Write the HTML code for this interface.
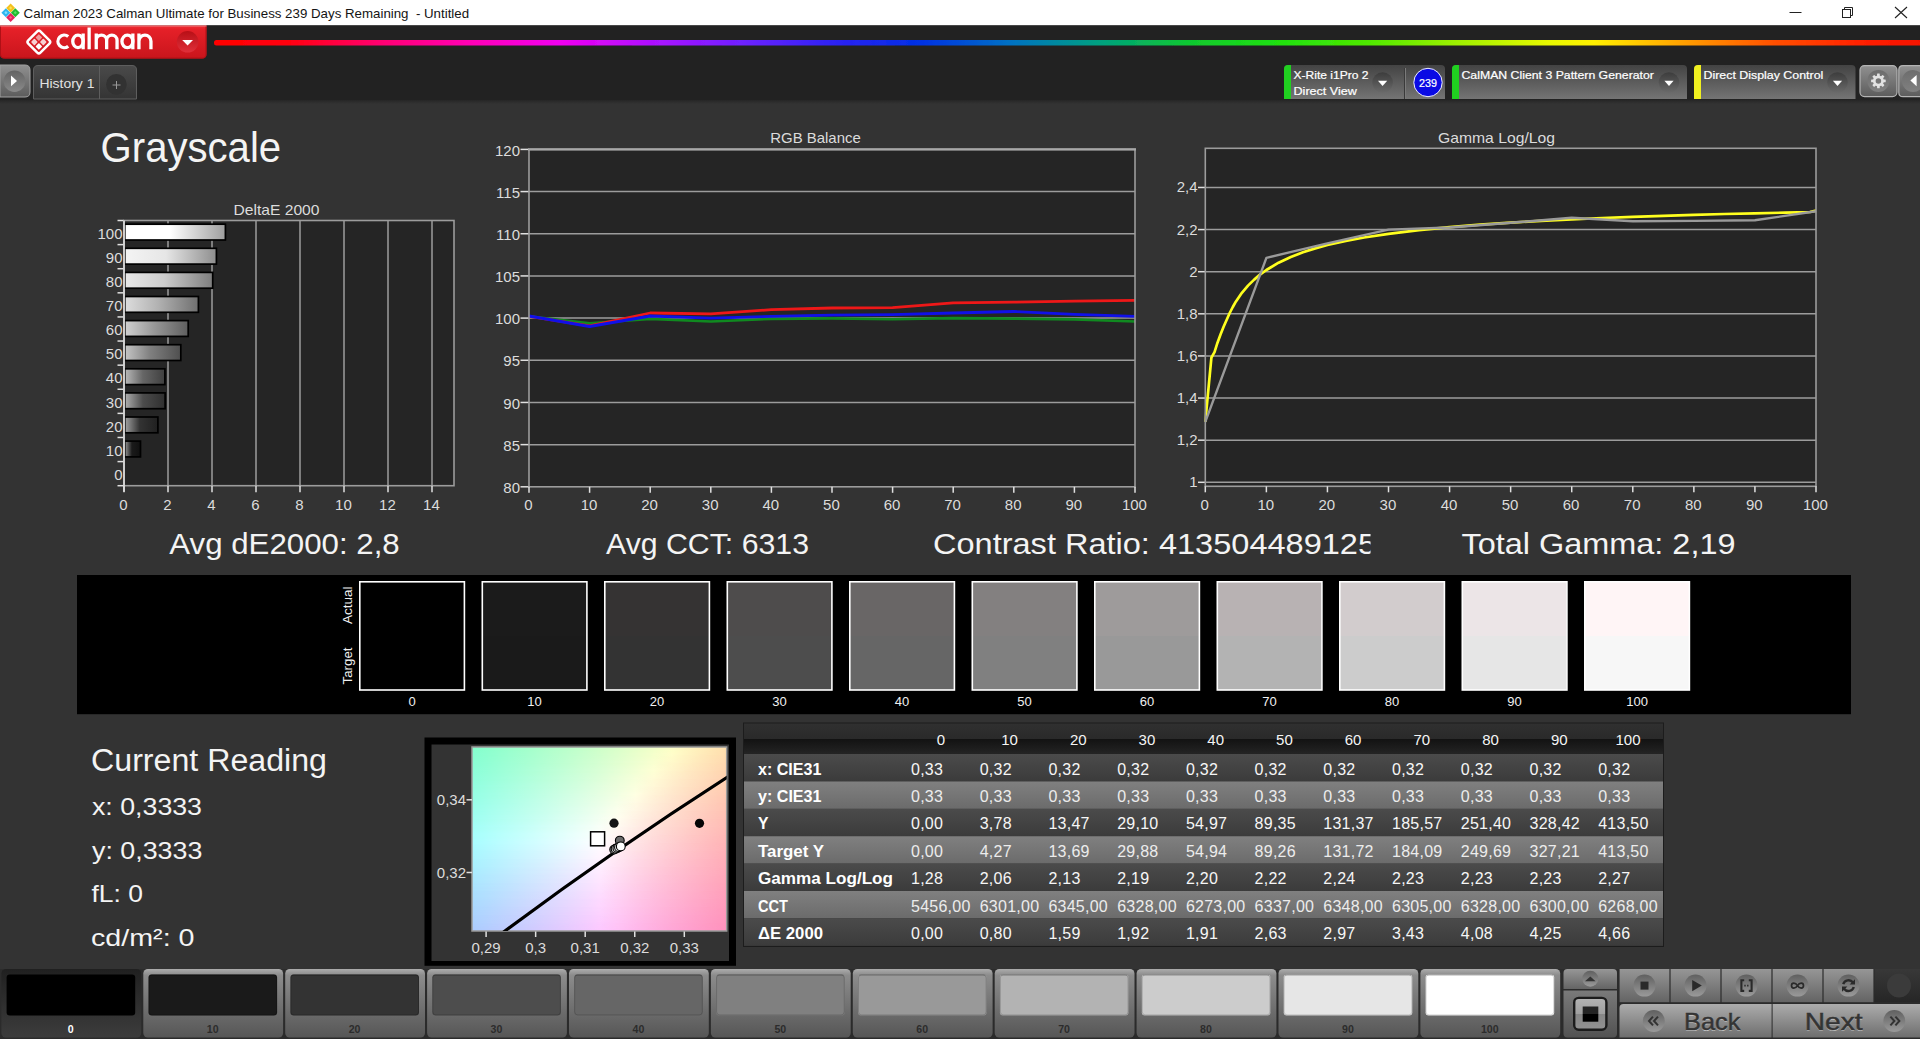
<!DOCTYPE html>
<html lang="en"><head><meta charset="utf-8"><title>Calman 2023 - Grayscale</title>
<style>
html,body{margin:0;padding:0;background:#333333;overflow:hidden}
body{width:1920px;height:1039px;position:relative;font-family:"Liberation Sans", sans-serif}
svg{position:absolute;left:0;top:0;display:block}
text{font-family:"Liberation Sans", sans-serif}
</style></head><body>
<svg width="1920" height="1039" viewBox="0 0 1920 1039">
<defs>
<linearGradient id="gRed" x1="0" y1="0" x2="0" y2="1"><stop offset="0" stop-color="#f03038"/><stop offset="0.12" stop-color="#e52028"/><stop offset="1" stop-color="#c9151c"/></linearGradient>
<linearGradient id="gRedBtn" x1="0" y1="0" x2="0" y2="1"><stop offset="0" stop-color="#b80f16"/><stop offset="1" stop-color="#e0303a"/></linearGradient>
<linearGradient id="gRainbow" x1="0" y1="0" x2="1" y2="0"><stop offset="0" stop-color="#ff0000"/><stop offset="0.044" stop-color="#ff0010"/><stop offset="0.097" stop-color="#ff0070"/><stop offset="0.149" stop-color="#ff00b4"/><stop offset="0.202" stop-color="#f000f0"/><stop offset="0.254" stop-color="#b010ff"/><stop offset="0.307" stop-color="#7020ff"/><stop offset="0.359" stop-color="#3020f4"/><stop offset="0.412" stop-color="#0030e4"/><stop offset="0.464" stop-color="#0070c4"/><stop offset="0.517" stop-color="#00a080"/><stop offset="0.57" stop-color="#10c830"/><stop offset="0.622" stop-color="#20e010"/><stop offset="0.675" stop-color="#50e800"/><stop offset="0.727" stop-color="#a0f000"/><stop offset="0.78" stop-color="#e8f800"/><stop offset="0.806" stop-color="#fff000"/><stop offset="0.858" stop-color="#ffa000"/><stop offset="0.911" stop-color="#ff5000"/><stop offset="0.963" stop-color="#ff2000"/><stop offset="1" stop-color="#f41000"/></linearGradient>
<linearGradient id="gPanel" x1="0" y1="0" x2="0" y2="1"><stop offset="0" stop-color="#434343"/><stop offset="1" stop-color="#747474"/></linearGradient>
<linearGradient id="gBtnLite" x1="0" y1="0" x2="0" y2="1"><stop offset="0" stop-color="#909090"/><stop offset="1" stop-color="#5c5c5c"/></linearGradient>
<linearGradient id="gCirc" x1="0" y1="0" x2="0" y2="1"><stop offset="0" stop-color="#3c3c3c"/><stop offset="1" stop-color="#6a6a6a"/></linearGradient>
<linearGradient id="gCircL" x1="0" y1="0" x2="0" y2="1"><stop offset="0" stop-color="#636363"/><stop offset="1" stop-color="#8a8a8a"/></linearGradient>
<linearGradient id="gShade" x1="0" y1="0" x2="0" y2="1"><stop offset="0" stop-color="#262626"/><stop offset="1" stop-color="#333333"/></linearGradient>
<filter id="fBlur" x="-1%" y="-100%" width="102%" height="300%"><feGaussianBlur stdDeviation="0.7"/></filter>
<linearGradient id="gTab" x1="0" y1="0" x2="0" y2="1"><stop offset="0" stop-color="#4a4a4a"/><stop offset="1" stop-color="#343434"/></linearGradient>
<linearGradient id="gHdr" x1="0" y1="0" x2="0" y2="1"><stop offset="0" stop-color="#303030"/><stop offset="0.5" stop-color="#2a2a2a"/><stop offset="0.5" stop-color="#121212"/><stop offset="1" stop-color="#242424"/></linearGradient>
<linearGradient id="gRowD" x1="0" y1="0" x2="0" y2="1"><stop offset="0" stop-color="#4b4b4b"/><stop offset="1" stop-color="#3b3b3b"/></linearGradient>
<linearGradient id="gRowL" x1="0" y1="0" x2="0" y2="1"><stop offset="0" stop-color="#808080"/><stop offset="1" stop-color="#6b6b6b"/></linearGradient>
<linearGradient id="gBB" x1="0" y1="0" x2="0" y2="1"><stop offset="0" stop-color="#acacac"/><stop offset="0.05" stop-color="#9a9a9a"/><stop offset="0.09" stop-color="#8c8c8c"/><stop offset="1" stop-color="#565656"/></linearGradient>
<linearGradient id="gBBsel" x1="0" y1="0" x2="0" y2="1"><stop offset="0" stop-color="#202020"/><stop offset="1" stop-color="#3c3c3c"/></linearGradient>
<linearGradient id="gCtl" x1="0" y1="0" x2="0" y2="1"><stop offset="0" stop-color="#969696"/><stop offset="1" stop-color="#646464"/></linearGradient>
<linearGradient id="gCtl2" x1="0" y1="0" x2="0" y2="1"><stop offset="0" stop-color="#acacac"/><stop offset="1" stop-color="#6e6e6e"/></linearGradient>
<linearGradient id="gCtlD" x1="0" y1="0" x2="0" y2="1"><stop offset="0" stop-color="#7a7a7a"/><stop offset="1" stop-color="#525252"/></linearGradient>
<linearGradient id="gGloss" x1="0" y1="0" x2="0" y2="1"><stop offset="0" stop-color="#b4b4b4"/><stop offset="0.5" stop-color="#a0a0a0"/><stop offset="0.5" stop-color="#868686"/><stop offset="1" stop-color="#929292"/></linearGradient>
<linearGradient id="gDarkR" x1="0" y1="0" x2="0" y2="1"><stop offset="0" stop-color="#383838"/><stop offset="1" stop-color="#262626"/></linearGradient>
<linearGradient id="gCtlC" x1="0" y1="0" x2="0" y2="1"><stop offset="0" stop-color="#606060"/><stop offset="1" stop-color="#9a9a9a"/></linearGradient>
<linearGradient id="vfadeG" x1="0" y1="0" x2="0" y2="1"><stop offset="0" stop-color="#000"/><stop offset="1" stop-color="#fff"/></linearGradient>
<mask id="vfade" maskContentUnits="objectBoundingBox"><rect x="0" y="0" width="1" height="1" fill="url(#vfadeG)"/></mask>

<linearGradient id="gb100" x1="0" y1="0" x2="1" y2="0"><stop offset="0" stop-color="#ffffff"/><stop offset="0.45" stop-color="#ffffff"/><stop offset="1" stop-color="#9e9e9e"/></linearGradient>
<linearGradient id="gb90" x1="0" y1="0" x2="1" y2="0"><stop offset="0" stop-color="#f4f4f4"/><stop offset="0.45" stop-color="#e6e6e6"/><stop offset="1" stop-color="#8e8e8e"/></linearGradient>
<linearGradient id="gb80" x1="0" y1="0" x2="1" y2="0"><stop offset="0" stop-color="#e8e8e8"/><stop offset="0.45" stop-color="#cccccc"/><stop offset="1" stop-color="#7e7e7e"/></linearGradient>
<linearGradient id="gb70" x1="0" y1="0" x2="1" y2="0"><stop offset="0" stop-color="#dddddd"/><stop offset="0.45" stop-color="#b2b2b2"/><stop offset="1" stop-color="#6f6f6f"/></linearGradient>
<linearGradient id="gb60" x1="0" y1="0" x2="1" y2="0"><stop offset="0" stop-color="#d1d1d1"/><stop offset="0.45" stop-color="#999999"/><stop offset="1" stop-color="#5f5f5f"/></linearGradient>
<linearGradient id="gb50" x1="0" y1="0" x2="1" y2="0"><stop offset="0" stop-color="#c6c6c6"/><stop offset="0.45" stop-color="#808080"/><stop offset="1" stop-color="#4f4f4f"/></linearGradient>
<linearGradient id="gb40" x1="0" y1="0" x2="1" y2="0"><stop offset="0" stop-color="#bababa"/><stop offset="0.45" stop-color="#666666"/><stop offset="1" stop-color="#3f3f3f"/></linearGradient>
<linearGradient id="gb30" x1="0" y1="0" x2="1" y2="0"><stop offset="0" stop-color="#afafaf"/><stop offset="0.45" stop-color="#4c4c4c"/><stop offset="1" stop-color="#2f2f2f"/></linearGradient>
<linearGradient id="gb20" x1="0" y1="0" x2="1" y2="0"><stop offset="0" stop-color="#a3a3a3"/><stop offset="0.45" stop-color="#333333"/><stop offset="1" stop-color="#202020"/></linearGradient>
<linearGradient id="gb10" x1="0" y1="0" x2="1" y2="0"><stop offset="0" stop-color="#989898"/><stop offset="0.45" stop-color="#1a1a1a"/><stop offset="1" stop-color="#101010"/></linearGradient>
<linearGradient id="cr0" x1="0" y1="0" x2="1" y2="0"><stop offset="0.0000" stop-color="#83ffcd"/><stop offset="0.0714" stop-color="#8dffcc"/><stop offset="0.1429" stop-color="#98ffcc"/><stop offset="0.2143" stop-color="#a2ffcb"/><stop offset="0.2857" stop-color="#adffcb"/><stop offset="0.3571" stop-color="#b7ffca"/><stop offset="0.4286" stop-color="#c2ffca"/><stop offset="0.5000" stop-color="#ceffc9"/><stop offset="0.5714" stop-color="#d9ffc9"/><stop offset="0.6429" stop-color="#e5ffc8"/><stop offset="0.7143" stop-color="#f1ffc8"/><stop offset="0.7857" stop-color="#fdffc7"/><stop offset="0.8571" stop-color="#fff5bf"/><stop offset="0.9286" stop-color="#ffeab6"/><stop offset="1.0000" stop-color="#ffdfad"/></linearGradient>
<linearGradient id="cr1" x1="0" y1="0" x2="1" y2="0"><stop offset="0.0000" stop-color="#86ffd1"/><stop offset="0.0714" stop-color="#90ffd0"/><stop offset="0.1429" stop-color="#9bffd0"/><stop offset="0.2143" stop-color="#a5ffcf"/><stop offset="0.2857" stop-color="#b0ffcf"/><stop offset="0.3571" stop-color="#bbffce"/><stop offset="0.4286" stop-color="#c6ffce"/><stop offset="0.5000" stop-color="#d1ffcd"/><stop offset="0.5714" stop-color="#ddffcd"/><stop offset="0.6429" stop-color="#e9ffcc"/><stop offset="0.7143" stop-color="#f5ffcc"/><stop offset="0.7857" stop-color="#fffdca"/><stop offset="0.8571" stop-color="#fff1c0"/><stop offset="0.9286" stop-color="#ffe6b6"/><stop offset="1.0000" stop-color="#ffdcae"/></linearGradient>
<linearGradient id="cr2" x1="0" y1="0" x2="1" y2="0"><stop offset="0.0000" stop-color="#89ffd4"/><stop offset="0.0714" stop-color="#93ffd4"/><stop offset="0.1429" stop-color="#9effd4"/><stop offset="0.2143" stop-color="#a8ffd3"/><stop offset="0.2857" stop-color="#b3ffd3"/><stop offset="0.3571" stop-color="#beffd2"/><stop offset="0.4286" stop-color="#caffd2"/><stop offset="0.5000" stop-color="#d5ffd2"/><stop offset="0.5714" stop-color="#e1ffd1"/><stop offset="0.6429" stop-color="#edffd1"/><stop offset="0.7143" stop-color="#f9ffd0"/><stop offset="0.7857" stop-color="#fff8ca"/><stop offset="0.8571" stop-color="#ffedc0"/><stop offset="0.9286" stop-color="#ffe2b7"/><stop offset="1.0000" stop-color="#ffd8af"/></linearGradient>
<linearGradient id="cr3" x1="0" y1="0" x2="1" y2="0"><stop offset="0.0000" stop-color="#8cffd9"/><stop offset="0.0714" stop-color="#96ffd8"/><stop offset="0.1429" stop-color="#a1ffd8"/><stop offset="0.2143" stop-color="#acffd7"/><stop offset="0.2857" stop-color="#b7ffd7"/><stop offset="0.3571" stop-color="#c2ffd7"/><stop offset="0.4286" stop-color="#ceffd6"/><stop offset="0.5000" stop-color="#d9ffd6"/><stop offset="0.5714" stop-color="#e5ffd6"/><stop offset="0.6429" stop-color="#f2ffd5"/><stop offset="0.7143" stop-color="#feffd5"/><stop offset="0.7857" stop-color="#fff4cb"/><stop offset="0.8571" stop-color="#ffe8c1"/><stop offset="0.9286" stop-color="#ffdeb8"/><stop offset="1.0000" stop-color="#ffd4af"/></linearGradient>
<linearGradient id="cr4" x1="0" y1="0" x2="1" y2="0"><stop offset="0.0000" stop-color="#8fffdd"/><stop offset="0.0714" stop-color="#99ffdc"/><stop offset="0.1429" stop-color="#a4ffdc"/><stop offset="0.2143" stop-color="#afffdc"/><stop offset="0.2857" stop-color="#baffdb"/><stop offset="0.3571" stop-color="#c6ffdb"/><stop offset="0.4286" stop-color="#d1ffdb"/><stop offset="0.5000" stop-color="#ddffda"/><stop offset="0.5714" stop-color="#eaffda"/><stop offset="0.6429" stop-color="#f6ffda"/><stop offset="0.7143" stop-color="#fffbd6"/><stop offset="0.7857" stop-color="#ffefcc"/><stop offset="0.8571" stop-color="#ffe4c2"/><stop offset="0.9286" stop-color="#ffdab9"/><stop offset="1.0000" stop-color="#ffd0b0"/></linearGradient>
<linearGradient id="cr5" x1="0" y1="0" x2="1" y2="0"><stop offset="0.0000" stop-color="#92ffe1"/><stop offset="0.0714" stop-color="#9dffe1"/><stop offset="0.1429" stop-color="#a8ffe0"/><stop offset="0.2143" stop-color="#b3ffe0"/><stop offset="0.2857" stop-color="#beffe0"/><stop offset="0.3571" stop-color="#caffdf"/><stop offset="0.4286" stop-color="#d5ffdf"/><stop offset="0.5000" stop-color="#e2ffdf"/><stop offset="0.5714" stop-color="#eeffde"/><stop offset="0.6429" stop-color="#faffde"/><stop offset="0.7143" stop-color="#fff7d7"/><stop offset="0.7857" stop-color="#ffebcc"/><stop offset="0.8571" stop-color="#ffe0c2"/><stop offset="0.9286" stop-color="#ffd6b9"/><stop offset="1.0000" stop-color="#ffcdb1"/></linearGradient>
<linearGradient id="cr6" x1="0" y1="0" x2="1" y2="0"><stop offset="0.0000" stop-color="#95ffe5"/><stop offset="0.0714" stop-color="#a0ffe5"/><stop offset="0.1429" stop-color="#abffe5"/><stop offset="0.2143" stop-color="#b6ffe4"/><stop offset="0.2857" stop-color="#c2ffe4"/><stop offset="0.3571" stop-color="#ceffe4"/><stop offset="0.4286" stop-color="#daffe4"/><stop offset="0.5000" stop-color="#e6ffe3"/><stop offset="0.5714" stop-color="#f2ffe3"/><stop offset="0.6429" stop-color="#ffffe3"/><stop offset="0.7143" stop-color="#fff2d7"/><stop offset="0.7857" stop-color="#ffe7cd"/><stop offset="0.8571" stop-color="#ffdcc3"/><stop offset="0.9286" stop-color="#ffd2ba"/><stop offset="1.0000" stop-color="#ffc9b2"/></linearGradient>
<linearGradient id="cr7" x1="0" y1="0" x2="1" y2="0"><stop offset="0.0000" stop-color="#98ffe9"/><stop offset="0.0714" stop-color="#a3ffe9"/><stop offset="0.1429" stop-color="#aeffe9"/><stop offset="0.2143" stop-color="#baffe9"/><stop offset="0.2857" stop-color="#c6ffe9"/><stop offset="0.3571" stop-color="#d2ffe8"/><stop offset="0.4286" stop-color="#deffe8"/><stop offset="0.5000" stop-color="#eaffe8"/><stop offset="0.5714" stop-color="#f7ffe8"/><stop offset="0.6429" stop-color="#fffae3"/><stop offset="0.7143" stop-color="#ffeed8"/><stop offset="0.7857" stop-color="#ffe3ce"/><stop offset="0.8571" stop-color="#ffd8c4"/><stop offset="0.9286" stop-color="#ffcfbb"/><stop offset="1.0000" stop-color="#ffc5b2"/></linearGradient>
<linearGradient id="cr8" x1="0" y1="0" x2="1" y2="0"><stop offset="0.0000" stop-color="#9bffee"/><stop offset="0.0714" stop-color="#a7ffee"/><stop offset="0.1429" stop-color="#b2ffee"/><stop offset="0.2143" stop-color="#beffed"/><stop offset="0.2857" stop-color="#c9ffed"/><stop offset="0.3571" stop-color="#d6ffed"/><stop offset="0.4286" stop-color="#e2ffed"/><stop offset="0.5000" stop-color="#efffed"/><stop offset="0.5714" stop-color="#fcffed"/><stop offset="0.6429" stop-color="#fff6e4"/><stop offset="0.7143" stop-color="#ffead9"/><stop offset="0.7857" stop-color="#ffdfce"/><stop offset="0.8571" stop-color="#ffd4c5"/><stop offset="0.9286" stop-color="#ffcbbc"/><stop offset="1.0000" stop-color="#ffc2b3"/></linearGradient>
<linearGradient id="cr9" x1="0" y1="0" x2="1" y2="0"><stop offset="0.0000" stop-color="#9ffff2"/><stop offset="0.0714" stop-color="#aafff2"/><stop offset="0.1429" stop-color="#b6fff2"/><stop offset="0.2143" stop-color="#c1fff2"/><stop offset="0.2857" stop-color="#cdfff2"/><stop offset="0.3571" stop-color="#dafff2"/><stop offset="0.4286" stop-color="#e6fff2"/><stop offset="0.5000" stop-color="#f3fff2"/><stop offset="0.5714" stop-color="#fffef0"/><stop offset="0.6429" stop-color="#fff1e4"/><stop offset="0.7143" stop-color="#ffe5d9"/><stop offset="0.7857" stop-color="#ffdbcf"/><stop offset="0.8571" stop-color="#ffd1c5"/><stop offset="0.9286" stop-color="#ffc7bc"/><stop offset="1.0000" stop-color="#ffbeb4"/></linearGradient>
<linearGradient id="cr10" x1="0" y1="0" x2="1" y2="0"><stop offset="0.0000" stop-color="#a2fff7"/><stop offset="0.0714" stop-color="#aefff7"/><stop offset="0.1429" stop-color="#b9fff7"/><stop offset="0.2143" stop-color="#c5fff7"/><stop offset="0.2857" stop-color="#d2fff7"/><stop offset="0.3571" stop-color="#defff7"/><stop offset="0.4286" stop-color="#ebfff7"/><stop offset="0.5000" stop-color="#f8fff7"/><stop offset="0.5714" stop-color="#fff9f1"/><stop offset="0.6429" stop-color="#ffede5"/><stop offset="0.7143" stop-color="#ffe1da"/><stop offset="0.7857" stop-color="#ffd7cf"/><stop offset="0.8571" stop-color="#ffcdc6"/><stop offset="0.9286" stop-color="#ffc4bd"/><stop offset="1.0000" stop-color="#ffbbb5"/></linearGradient>
<linearGradient id="cr11" x1="0" y1="0" x2="1" y2="0"><stop offset="0.0000" stop-color="#a6fffc"/><stop offset="0.0714" stop-color="#b1fffc"/><stop offset="0.1429" stop-color="#bdfffc"/><stop offset="0.2143" stop-color="#c9fffc"/><stop offset="0.2857" stop-color="#d6fffc"/><stop offset="0.3571" stop-color="#e2fffc"/><stop offset="0.4286" stop-color="#effffc"/><stop offset="0.5000" stop-color="#fdfffc"/><stop offset="0.5714" stop-color="#fff4f1"/><stop offset="0.6429" stop-color="#ffe8e5"/><stop offset="0.7143" stop-color="#ffddda"/><stop offset="0.7857" stop-color="#ffd3d0"/><stop offset="0.8571" stop-color="#ffc9c6"/><stop offset="0.9286" stop-color="#ffc0be"/><stop offset="1.0000" stop-color="#ffb8b5"/></linearGradient>
<linearGradient id="cr12" x1="0" y1="0" x2="1" y2="0"><stop offset="0.0000" stop-color="#a8fdff"/><stop offset="0.0714" stop-color="#b4fdff"/><stop offset="0.1429" stop-color="#c0fdff"/><stop offset="0.2143" stop-color="#ccfdff"/><stop offset="0.2857" stop-color="#d8fdff"/><stop offset="0.3571" stop-color="#e5fdff"/><stop offset="0.4286" stop-color="#f2fdff"/><stop offset="0.5000" stop-color="#fffdff"/><stop offset="0.5714" stop-color="#fff0f2"/><stop offset="0.6429" stop-color="#ffe4e6"/><stop offset="0.7143" stop-color="#ffd9db"/><stop offset="0.7857" stop-color="#ffcfd1"/><stop offset="0.8571" stop-color="#ffc5c7"/><stop offset="0.9286" stop-color="#ffbcbe"/><stop offset="1.0000" stop-color="#ffb4b6"/></linearGradient>
<linearGradient id="cr13" x1="0" y1="0" x2="1" y2="0"><stop offset="0.0000" stop-color="#a8f8ff"/><stop offset="0.0714" stop-color="#b4f8ff"/><stop offset="0.1429" stop-color="#c0f8ff"/><stop offset="0.2143" stop-color="#ccf8ff"/><stop offset="0.2857" stop-color="#d8f8ff"/><stop offset="0.3571" stop-color="#e5f8ff"/><stop offset="0.4286" stop-color="#f2f8ff"/><stop offset="0.5000" stop-color="#fff8ff"/><stop offset="0.5714" stop-color="#ffebf2"/><stop offset="0.6429" stop-color="#ffe0e6"/><stop offset="0.7143" stop-color="#ffd5db"/><stop offset="0.7857" stop-color="#ffcbd1"/><stop offset="0.8571" stop-color="#ffc2c8"/><stop offset="0.9286" stop-color="#ffb9bf"/><stop offset="1.0000" stop-color="#ffb1b7"/></linearGradient>
<linearGradient id="cr14" x1="0" y1="0" x2="1" y2="0"><stop offset="0.0000" stop-color="#a9f4ff"/><stop offset="0.0714" stop-color="#b4f3ff"/><stop offset="0.1429" stop-color="#c0f3ff"/><stop offset="0.2143" stop-color="#ccf3ff"/><stop offset="0.2857" stop-color="#d8f3ff"/><stop offset="0.3571" stop-color="#e5f3ff"/><stop offset="0.4286" stop-color="#f2f3ff"/><stop offset="0.5000" stop-color="#fff3ff"/><stop offset="0.5714" stop-color="#ffe7f3"/><stop offset="0.6429" stop-color="#ffdbe7"/><stop offset="0.7143" stop-color="#ffd1dc"/><stop offset="0.7857" stop-color="#ffc7d2"/><stop offset="0.8571" stop-color="#ffbec8"/><stop offset="0.9286" stop-color="#ffb5c0"/><stop offset="1.0000" stop-color="#ffadb7"/></linearGradient>
<linearGradient id="cr15" x1="0" y1="0" x2="1" y2="0"><stop offset="0.0000" stop-color="#a9efff"/><stop offset="0.0714" stop-color="#b4efff"/><stop offset="0.1429" stop-color="#c0efff"/><stop offset="0.2143" stop-color="#cceeff"/><stop offset="0.2857" stop-color="#d8eeff"/><stop offset="0.3571" stop-color="#e5eeff"/><stop offset="0.4286" stop-color="#f1eeff"/><stop offset="0.5000" stop-color="#feeeff"/><stop offset="0.5714" stop-color="#ffe2f3"/><stop offset="0.6429" stop-color="#ffd7e7"/><stop offset="0.7143" stop-color="#ffcddc"/><stop offset="0.7857" stop-color="#ffc3d2"/><stop offset="0.8571" stop-color="#ffbac9"/><stop offset="0.9286" stop-color="#ffb2c0"/><stop offset="1.0000" stop-color="#ffaab8"/></linearGradient>
<linearGradient id="cr16" x1="0" y1="0" x2="1" y2="0"><stop offset="0.0000" stop-color="#a9eaff"/><stop offset="0.0714" stop-color="#b5eaff"/><stop offset="0.1429" stop-color="#c0eaff"/><stop offset="0.2143" stop-color="#cceaff"/><stop offset="0.2857" stop-color="#d8e9ff"/><stop offset="0.3571" stop-color="#e4e9ff"/><stop offset="0.4286" stop-color="#f1e9ff"/><stop offset="0.5000" stop-color="#fee9ff"/><stop offset="0.5714" stop-color="#ffdef4"/><stop offset="0.6429" stop-color="#ffd3e8"/><stop offset="0.7143" stop-color="#ffc9dd"/><stop offset="0.7857" stop-color="#ffbfd3"/><stop offset="0.8571" stop-color="#ffb7ca"/><stop offset="0.9286" stop-color="#ffafc1"/><stop offset="1.0000" stop-color="#ffa7b9"/></linearGradient>
<linearGradient id="cr17" x1="0" y1="0" x2="1" y2="0"><stop offset="0.0000" stop-color="#aae6ff"/><stop offset="0.0714" stop-color="#b5e6ff"/><stop offset="0.1429" stop-color="#c0e5ff"/><stop offset="0.2143" stop-color="#cce5ff"/><stop offset="0.2857" stop-color="#d8e5ff"/><stop offset="0.3571" stop-color="#e4e4ff"/><stop offset="0.4286" stop-color="#f1e4ff"/><stop offset="0.5000" stop-color="#fee4ff"/><stop offset="0.5714" stop-color="#ffdaf4"/><stop offset="0.6429" stop-color="#ffcfe8"/><stop offset="0.7143" stop-color="#ffc5de"/><stop offset="0.7857" stop-color="#ffbcd4"/><stop offset="0.8571" stop-color="#ffb3ca"/><stop offset="0.9286" stop-color="#ffabc1"/><stop offset="1.0000" stop-color="#ffa4b9"/></linearGradient>
<linearGradient id="cr18" x1="0" y1="0" x2="1" y2="0"><stop offset="0.0000" stop-color="#aae1ff"/><stop offset="0.0714" stop-color="#b5e1ff"/><stop offset="0.1429" stop-color="#c0e1ff"/><stop offset="0.2143" stop-color="#cce0ff"/><stop offset="0.2857" stop-color="#d8e0ff"/><stop offset="0.3571" stop-color="#e4e0ff"/><stop offset="0.4286" stop-color="#f1dfff"/><stop offset="0.5000" stop-color="#fddfff"/><stop offset="0.5714" stop-color="#ffd5f4"/><stop offset="0.6429" stop-color="#ffcbe9"/><stop offset="0.7143" stop-color="#ffc1de"/><stop offset="0.7857" stop-color="#ffb8d4"/><stop offset="0.8571" stop-color="#ffb0cb"/><stop offset="0.9286" stop-color="#ffa8c2"/><stop offset="1.0000" stop-color="#ffa0ba"/></linearGradient>
<linearGradient id="cr19" x1="0" y1="0" x2="1" y2="0"><stop offset="0.0000" stop-color="#aaddff"/><stop offset="0.0714" stop-color="#b5ddff"/><stop offset="0.1429" stop-color="#c1dcff"/><stop offset="0.2143" stop-color="#ccdcff"/><stop offset="0.2857" stop-color="#d8dbff"/><stop offset="0.3571" stop-color="#e4dbff"/><stop offset="0.4286" stop-color="#f0dbff"/><stop offset="0.5000" stop-color="#fddaff"/><stop offset="0.5714" stop-color="#ffd1f5"/><stop offset="0.6429" stop-color="#ffc7e9"/><stop offset="0.7143" stop-color="#ffbddf"/><stop offset="0.7857" stop-color="#ffb5d5"/><stop offset="0.8571" stop-color="#ffaccb"/><stop offset="0.9286" stop-color="#ffa5c3"/><stop offset="1.0000" stop-color="#ff9dbb"/></linearGradient>
<linearGradient id="cr20" x1="0" y1="0" x2="1" y2="0"><stop offset="0.0000" stop-color="#aad9ff"/><stop offset="0.0714" stop-color="#b5d8ff"/><stop offset="0.1429" stop-color="#c1d8ff"/><stop offset="0.2143" stop-color="#ccd7ff"/><stop offset="0.2857" stop-color="#d8d7ff"/><stop offset="0.3571" stop-color="#e4d6ff"/><stop offset="0.4286" stop-color="#f0d6ff"/><stop offset="0.5000" stop-color="#fdd6ff"/><stop offset="0.5714" stop-color="#ffcdf5"/><stop offset="0.6429" stop-color="#ffc3ea"/><stop offset="0.7143" stop-color="#ffbadf"/><stop offset="0.7857" stop-color="#ffb1d5"/><stop offset="0.8571" stop-color="#ffa9cc"/><stop offset="0.9286" stop-color="#ffa1c3"/><stop offset="1.0000" stop-color="#ff9abb"/></linearGradient>
<linearGradient id="cr21" x1="0" y1="0" x2="1" y2="0"><stop offset="0.0000" stop-color="#abd4ff"/><stop offset="0.0714" stop-color="#b6d4ff"/><stop offset="0.1429" stop-color="#c1d3ff"/><stop offset="0.2143" stop-color="#ccd3ff"/><stop offset="0.2857" stop-color="#d8d2ff"/><stop offset="0.3571" stop-color="#e4d2ff"/><stop offset="0.4286" stop-color="#f0d1ff"/><stop offset="0.5000" stop-color="#fcd1ff"/><stop offset="0.5714" stop-color="#ffc9f6"/><stop offset="0.6429" stop-color="#ffbfea"/><stop offset="0.7143" stop-color="#ffb6e0"/><stop offset="0.7857" stop-color="#ffadd6"/><stop offset="0.8571" stop-color="#ffa5cd"/><stop offset="0.9286" stop-color="#ff9ec4"/><stop offset="1.0000" stop-color="#ff97bc"/></linearGradient>
<linearGradient id="cr22" x1="0" y1="0" x2="1" y2="0"><stop offset="0.0000" stop-color="#abd0ff"/><stop offset="0.0714" stop-color="#b6d0ff"/><stop offset="0.1429" stop-color="#c1cfff"/><stop offset="0.2143" stop-color="#cccfff"/><stop offset="0.2857" stop-color="#d8ceff"/><stop offset="0.3571" stop-color="#e4ceff"/><stop offset="0.4286" stop-color="#f0cdff"/><stop offset="0.5000" stop-color="#fcccff"/><stop offset="0.5714" stop-color="#ffc5f6"/><stop offset="0.6429" stop-color="#ffbbeb"/><stop offset="0.7143" stop-color="#ffb2e0"/><stop offset="0.7857" stop-color="#ffaad6"/><stop offset="0.8571" stop-color="#ffa2cd"/><stop offset="0.9286" stop-color="#ff9bc4"/><stop offset="1.0000" stop-color="#ff94bc"/></linearGradient>
<linearGradient id="cr23" x1="0" y1="0" x2="1" y2="0"><stop offset="0.0000" stop-color="#abccff"/><stop offset="0.0714" stop-color="#b6cbff"/><stop offset="0.1429" stop-color="#c1cbff"/><stop offset="0.2143" stop-color="#cccaff"/><stop offset="0.2857" stop-color="#d8caff"/><stop offset="0.3571" stop-color="#e3c9ff"/><stop offset="0.4286" stop-color="#efc9ff"/><stop offset="0.5000" stop-color="#fcc8ff"/><stop offset="0.5714" stop-color="#ffc1f6"/><stop offset="0.6429" stop-color="#ffb7eb"/><stop offset="0.7143" stop-color="#ffafe1"/><stop offset="0.7857" stop-color="#ffa6d7"/><stop offset="0.8571" stop-color="#ff9fce"/><stop offset="0.9286" stop-color="#ff98c5"/><stop offset="1.0000" stop-color="#ff91bd"/></linearGradient>
</defs>
<rect x="0" y="0" width="1920" height="25.4" fill="#ffffff" />
<path d="M10.6 3.4000000000000004L15.1 7.9L10.6 12.4L6.1 7.9Z" fill="#f4c21e"/>
<path d="M5.9 8.15L10.4 12.65L5.9 17.15L1.4000000000000004 12.65Z" fill="#2fb4ee"/>
<path d="M15.3 8.15L19.8 12.65L15.3 17.15L10.8 12.65Z" fill="#22bb30"/>
<path d="M10.6 12.899999999999999L15.1 17.4L10.6 21.9L6.1 17.4Z" fill="#e6245c"/>
<path d="M10.6 6.300000000000001L12.2 7.9L10.6 9.5L9.0 7.9Z" fill="#fbe05a"/>
<path d="M5.9 11.05L7.5 12.65L5.9 14.25L4.300000000000001 12.65Z" fill="#7fe0ff"/>
<path d="M15.3 11.05L16.900000000000002 12.65L15.3 14.25L13.700000000000001 12.65Z" fill="#58e060"/>
<path d="M10.6 15.799999999999999L12.2 17.4L10.6 19.0L9.0 17.4Z" fill="#ff5a86"/>
<text x="23.6" y="17.8" font-size="13.4" fill="#141414" textLength="445.5" lengthAdjust="spacingAndGlyphs" style="white-space:pre">Calman 2023 Calman Ultimate for Business 239 Days Remaining  - Untitled</text>
<line x1="1789.5" y1="12.5" x2="1801.5" y2="12.5" stroke="#222" stroke-width="1" />
<rect x="1842.5" y="9.5" width="8" height="8" fill="none" stroke="#222" stroke-width="1"/><path d="M1844.5 9.5V7.5H1852.5V15.5H1850.5" fill="none" stroke="#222" stroke-width="1"/>
<path d="M1895 7L1907 18M1907 7L1895 18" stroke="#222" stroke-width="1.1" fill="none"/>
<rect x="0" y="25.4" width="1920" height="74.6" fill="#222222" />
<path d="M0 25.4H206.5V54Q206.5 58.6 202 58.6H4.5Q0 58.6 0 54Z" fill="url(#gRed)"/>
<path d="M0.5 26V54Q0.5 58.1 4.5 58.1H202Q206 58.1 206 54V26" fill="none" stroke="#b01016" stroke-width="1"/>
<line x1="0" y1="25.9" x2="206.5" y2="25.9" stroke="#f39a9a" stroke-width="1" />
<g transform="translate(38.85 42) rotate(45)">
<rect x="-8.6" y="-8.6" width="17.2" height="17.2" rx="2.2" fill="none" stroke="#fff" stroke-width="2.5"/>
<rect x="-5.6" y="-5.6" width="4.9" height="4.9" rx="0.8" fill="#fff" fill-opacity="0.55"/>
<rect x="0.6999999999999997" y="-5.6" width="4.9" height="4.9" rx="0.8" fill="#fff" fill-opacity="0.8"/>
<rect x="-5.6" y="0.6999999999999997" width="4.9" height="4.9" rx="0.8" fill="#fff" fill-opacity="0.8"/>
<rect x="0.6999999999999997" y="0.6999999999999997" width="4.9" height="4.9" rx="0.8" fill="#fff" fill-opacity="1.0"/>
</g>
<g fill="none" stroke="#fff" stroke-width="3.3"><path d="M68.22 36.61A6.25 6.25 0 1 0 68.22 46.19"/><ellipse cx="77.95" cy="41.4" rx="5.2" ry="6.25"/><path d="M83.15 33.5V49.3"/><path d="M89.15 27.5V49.3"/><path d="M96.25 49.3V33.5M96.25 40.35A5.2 5.2 0 0 1 106.65 40.35V49.3M106.65 40.35A5.2 5.2 0 0 1 117.05 40.35V49.3"/><ellipse cx="127.4" cy="41.4" rx="5.45" ry="6.25"/><path d="M132.85 33.5V49.3"/><path d="M138.95 49.3V33.5M138.95 41.15A6 6 0 0 1 150.95 41.15V49.3"/></g>
<circle cx="187.6" cy="41.8" r="10.8" fill="url(#gRedBtn)"/>
<path d="M182.2 40H193L187.6 45.6Z" fill="#fff"/>
<rect x="214" y="40.1" width="1712" height="5.3" fill="url(#gRainbow)"  rx="2.5" filter="url(#fBlur)"/>
<path d="M0 65H25Q30 65 30 70V92Q30 97 25 97H0Z" fill="url(#gBtnLite)" stroke="#a0a0a0" stroke-width="1"/>
<circle cx="14.5" cy="81.2" r="10.8" fill="url(#gCircL)"/>
<path d="M11 75.6L17 80.9L11 86.2Z" fill="#fff"/>
<path d="M33.5 99V70Q33.5 65.5 38 65.5H132Q136.5 65.5 136.5 70V99Z" fill="url(#gTab)" stroke="#5e5e5e" stroke-width="1"/>
<line x1="99.5" y1="66" x2="99.5" y2="99" stroke="#5e5e5e" stroke-width="1" />
<text x="39.4" y="87.8" font-size="13.5" fill="#e2e2e2" textLength="55" lengthAdjust="spacingAndGlyphs" >History 1</text>
<circle cx="116.4" cy="84.4" r="10.3" fill="#323232"/>
<path d="M112.5 85H120.5M116.5 81V89" stroke="#999" stroke-width="1" fill="none"/>
<path d="M1284 99V69Q1284 65 1288 65H1441Q1445 65 1445 69V99Z" fill="url(#gPanel)"/>
<path d="M1284 99V69Q1284 65 1288 65H1291V99Z" fill="#20d020"/>
<text x="1293.5" y="78.5" font-size="11.8" fill="#ffffff" textLength="75" lengthAdjust="spacingAndGlyphs" stroke="#ffffff" stroke-width="0.22">X-Rite i1Pro 2</text>
<text x="1293.5" y="94.7" font-size="11.8" fill="#ffffff" textLength="63.4" lengthAdjust="spacingAndGlyphs" stroke="#ffffff" stroke-width="0.22">Direct View</text>
<circle cx="1382.6" cy="82.5" r="10.3" fill="url(#gCirc)"/>
<path d="M1378.0 80.8H1387.1999999999998L1382.6 86.1Z" fill="#fff"/>
<line x1="1404.5" y1="68" x2="1404.5" y2="99" stroke="#3a3a3a" stroke-width="1" />
<line x1="1405.5" y1="68" x2="1405.5" y2="99" stroke="#7a7a7a" stroke-width="1" />
<circle cx="1428" cy="82.5" r="14.2" fill="#0a0ae4" stroke="#f0f0ff" stroke-width="1"/>
<text x="1428" y="86.5" font-size="11" fill="#ffffff" text-anchor="middle" textLength="18" lengthAdjust="spacingAndGlyphs" stroke="#ffffff" stroke-width="0.22">239</text>
<path d="M1452 99V69Q1452 65 1456 65H1683Q1687 65 1687 69V99Z" fill="url(#gPanel)"/>
<path d="M1452 99V69Q1452 65 1456 65H1459V99Z" fill="#20d020"/>
<text x="1461.5" y="78.5" font-size="11.8" fill="#ffffff" textLength="192.4" lengthAdjust="spacingAndGlyphs" stroke="#ffffff" stroke-width="0.22">CalMAN Client 3 Pattern Generator</text>
<circle cx="1669" cy="82.5" r="10.3" fill="url(#gCirc)"/>
<path d="M1664.4 80.8H1673.6L1669 86.1Z" fill="#fff"/>
<path d="M1694 99V69Q1694 65 1698 65H1851.5Q1855.5 65 1855.5 69V99Z" fill="url(#gPanel)"/>
<path d="M1694 99V69Q1694 65 1698 65H1701V99Z" fill="#f0f020"/>
<text x="1703.5" y="78.5" font-size="11.8" fill="#ffffff" textLength="119.8" lengthAdjust="spacingAndGlyphs" stroke="#ffffff" stroke-width="0.22">Direct Display Control</text>
<circle cx="1837.5" cy="82.5" r="10.3" fill="url(#gCirc)"/>
<path d="M1832.9 80.8H1842.1L1837.5 86.1Z" fill="#fff"/>
<rect x="1860" y="65.6" width="37" height="31" rx="4.5" fill="url(#gBtnLite)" stroke="#b4b4b4" stroke-width="1.2"/>
<circle cx="1878.4" cy="80.9" r="11" fill="url(#gCircL)" fill-opacity="0.75"/>
<g transform="translate(1878.4 80.9)" fill="#e2e2e2"><rect x="-1.35" y="-7.3" width="2.7" height="3" rx="0.5" transform="rotate(0)"/><rect x="-1.35" y="-7.3" width="2.7" height="3" rx="0.5" transform="rotate(45)"/><rect x="-1.35" y="-7.3" width="2.7" height="3" rx="0.5" transform="rotate(90)"/><rect x="-1.35" y="-7.3" width="2.7" height="3" rx="0.5" transform="rotate(135)"/><rect x="-1.35" y="-7.3" width="2.7" height="3" rx="0.5" transform="rotate(180)"/><rect x="-1.35" y="-7.3" width="2.7" height="3" rx="0.5" transform="rotate(225)"/><rect x="-1.35" y="-7.3" width="2.7" height="3" rx="0.5" transform="rotate(270)"/><rect x="-1.35" y="-7.3" width="2.7" height="3" rx="0.5" transform="rotate(315)"/><circle r="4.1" fill="none" stroke="#e2e2e2" stroke-width="2.7"/></g>
<path d="M1921 65.6H1903Q1898.8 65.6 1898.8 69.8V92.4Q1898.8 96.6 1903 96.6H1921Z" fill="url(#gBtnLite)" stroke="#b4b4b4" stroke-width="1.2"/>
<circle cx="1913" cy="80.9" r="11" fill="url(#gCircL)" fill-opacity="0.75"/>
<path d="M1916.6 75L1910.4 80.6L1916.6 86.2Z" fill="#fff"/>
<rect x="0" y="100" width="1920" height="869" fill="#333333" />
<rect x="0" y="100" width="1920" height="4" fill="url(#gShade)" />
<text x="100.6" y="162" font-size="42" fill="#f4f4f4" textLength="180.5" lengthAdjust="spacingAndGlyphs" >Grayscale</text>
<text x="276.5" y="215" font-size="15" fill="#dcdcdc" text-anchor="middle" textLength="86" lengthAdjust="spacingAndGlyphs" >DeltaE 2000</text>
<rect x="124" y="220.5" width="330" height="265.2" fill="#252525" />
<line x1="168" y1="220.5" x2="168" y2="485.7" stroke="#9c9c9c" stroke-width="1.5" />
<line x1="212" y1="220.5" x2="212" y2="485.7" stroke="#9c9c9c" stroke-width="1.5" />
<line x1="256" y1="220.5" x2="256" y2="485.7" stroke="#9c9c9c" stroke-width="1.5" />
<line x1="300" y1="220.5" x2="300" y2="485.7" stroke="#9c9c9c" stroke-width="1.5" />
<line x1="344" y1="220.5" x2="344" y2="485.7" stroke="#9c9c9c" stroke-width="1.5" />
<line x1="388" y1="220.5" x2="388" y2="485.7" stroke="#9c9c9c" stroke-width="1.5" />
<line x1="432" y1="220.5" x2="432" y2="485.7" stroke="#9c9c9c" stroke-width="1.5" />
<text x="122.5" y="238.75454545454545" font-size="15" fill="#dcdcdc" text-anchor="end" >100</text>
<rect x="124.8" y="224.2" width="100.6" height="15.8" fill="url(#gb100)"  stroke="#000" stroke-width="1.7"/>
<text x="122.5" y="262.8636363636364" font-size="15" fill="#dcdcdc" text-anchor="end" >90</text>
<rect x="124.8" y="248.3" width="91.6" height="15.8" fill="url(#gb90)"  stroke="#000" stroke-width="1.7"/>
<text x="122.5" y="286.97272727272724" font-size="15" fill="#dcdcdc" text-anchor="end" >80</text>
<rect x="124.8" y="272.4" width="87.9" height="15.8" fill="url(#gb80)"  stroke="#000" stroke-width="1.7"/>
<text x="122.5" y="311.08181818181816" font-size="15" fill="#dcdcdc" text-anchor="end" >70</text>
<rect x="124.8" y="296.5" width="73.6" height="15.8" fill="url(#gb70)"  stroke="#000" stroke-width="1.7"/>
<text x="122.5" y="335.1909090909091" font-size="15" fill="#dcdcdc" text-anchor="end" >60</text>
<rect x="124.8" y="320.6" width="63.4" height="15.8" fill="url(#gb60)"  stroke="#000" stroke-width="1.7"/>
<text x="122.5" y="359.3" font-size="15" fill="#dcdcdc" text-anchor="end" >50</text>
<rect x="124.8" y="344.7" width="56.0" height="15.8" fill="url(#gb50)"  stroke="#000" stroke-width="1.7"/>
<text x="122.5" y="383.40909090909093" font-size="15" fill="#dcdcdc" text-anchor="end" >40</text>
<rect x="124.8" y="368.8" width="40.1" height="15.8" fill="url(#gb40)"  stroke="#000" stroke-width="1.7"/>
<text x="122.5" y="407.5181818181818" font-size="15" fill="#dcdcdc" text-anchor="end" >30</text>
<rect x="124.8" y="392.9" width="40.3" height="15.8" fill="url(#gb30)"  stroke="#000" stroke-width="1.7"/>
<text x="122.5" y="431.6272727272727" font-size="15" fill="#dcdcdc" text-anchor="end" >20</text>
<rect x="124.8" y="417.0" width="33.1" height="15.8" fill="url(#gb20)"  stroke="#000" stroke-width="1.7"/>
<text x="122.5" y="455.7363636363636" font-size="15" fill="#dcdcdc" text-anchor="end" >10</text>
<rect x="124.8" y="441.1" width="15.7" height="15.8" fill="url(#gb10)"  stroke="#000" stroke-width="1.7"/>
<text x="122.5" y="479.8454545454545" font-size="15" fill="#dcdcdc" text-anchor="end" >0</text>
<line x1="117.5" y1="220.5" x2="124" y2="220.5" stroke="#e0e0e0" stroke-width="1.5" />
<line x1="117.5" y1="244.60909090909092" x2="124" y2="244.60909090909092" stroke="#e0e0e0" stroke-width="1.5" />
<line x1="117.5" y1="268.71818181818185" x2="124" y2="268.71818181818185" stroke="#e0e0e0" stroke-width="1.5" />
<line x1="117.5" y1="292.8272727272727" x2="124" y2="292.8272727272727" stroke="#e0e0e0" stroke-width="1.5" />
<line x1="117.5" y1="316.93636363636364" x2="124" y2="316.93636363636364" stroke="#e0e0e0" stroke-width="1.5" />
<line x1="117.5" y1="341.04545454545456" x2="124" y2="341.04545454545456" stroke="#e0e0e0" stroke-width="1.5" />
<line x1="117.5" y1="365.1545454545454" x2="124" y2="365.1545454545454" stroke="#e0e0e0" stroke-width="1.5" />
<line x1="117.5" y1="389.26363636363635" x2="124" y2="389.26363636363635" stroke="#e0e0e0" stroke-width="1.5" />
<line x1="117.5" y1="413.3727272727273" x2="124" y2="413.3727272727273" stroke="#e0e0e0" stroke-width="1.5" />
<line x1="117.5" y1="437.4818181818182" x2="124" y2="437.4818181818182" stroke="#e0e0e0" stroke-width="1.5" />
<line x1="117.5" y1="461.5909090909091" x2="124" y2="461.5909090909091" stroke="#e0e0e0" stroke-width="1.5" />
<line x1="117.5" y1="485.7" x2="124" y2="485.7" stroke="#e0e0e0" stroke-width="1.5" />
<rect x="124" y="220.5" width="330" height="265.2" fill="none" stroke="#9c9c9c" stroke-width="1.6"/>
<line x1="124" y1="220.5" x2="124" y2="491.7" stroke="#e0e0e0" stroke-width="1.6" />
<line x1="124" y1="485.7" x2="124" y2="492.2" stroke="#e0e0e0" stroke-width="1.5" />
<text x="123.4" y="509.8" font-size="15" fill="#dcdcdc" text-anchor="middle" >0</text>
<line x1="168" y1="485.7" x2="168" y2="492.2" stroke="#e0e0e0" stroke-width="1.5" />
<text x="167.4" y="509.8" font-size="15" fill="#dcdcdc" text-anchor="middle" >2</text>
<line x1="212" y1="485.7" x2="212" y2="492.2" stroke="#e0e0e0" stroke-width="1.5" />
<text x="211.4" y="509.8" font-size="15" fill="#dcdcdc" text-anchor="middle" >4</text>
<line x1="256" y1="485.7" x2="256" y2="492.2" stroke="#e0e0e0" stroke-width="1.5" />
<text x="255.4" y="509.8" font-size="15" fill="#dcdcdc" text-anchor="middle" >6</text>
<line x1="300" y1="485.7" x2="300" y2="492.2" stroke="#e0e0e0" stroke-width="1.5" />
<text x="299.4" y="509.8" font-size="15" fill="#dcdcdc" text-anchor="middle" >8</text>
<line x1="344" y1="485.7" x2="344" y2="492.2" stroke="#e0e0e0" stroke-width="1.5" />
<text x="343.4" y="509.8" font-size="15" fill="#dcdcdc" text-anchor="middle" >10</text>
<line x1="388" y1="485.7" x2="388" y2="492.2" stroke="#e0e0e0" stroke-width="1.5" />
<text x="387.4" y="509.8" font-size="15" fill="#dcdcdc" text-anchor="middle" >12</text>
<line x1="432" y1="485.7" x2="432" y2="492.2" stroke="#e0e0e0" stroke-width="1.5" />
<text x="431.4" y="509.8" font-size="15" fill="#dcdcdc" text-anchor="middle" >14</text>
<text x="815.5" y="142.8" font-size="15" fill="#dcdcdc" text-anchor="middle" textLength="90.5" lengthAdjust="spacingAndGlyphs" >RGB Balance</text>
<rect x="529" y="149.4" width="606" height="337.4" fill="#252525" />
<line x1="520.5" y1="486.8" x2="529" y2="486.8" stroke="#e0e0e0" stroke-width="1.5" />
<text x="520" y="492.90000000000003" font-size="15" fill="#dcdcdc" text-anchor="end" >80</text>
<line x1="529" y1="444.625" x2="1135" y2="444.625" stroke="#9c9c9c" stroke-width="1.5" />
<line x1="520.5" y1="444.625" x2="529" y2="444.625" stroke="#e0e0e0" stroke-width="1.5" />
<text x="520" y="450.725" font-size="15" fill="#dcdcdc" text-anchor="end" >85</text>
<line x1="529" y1="402.45000000000005" x2="1135" y2="402.45000000000005" stroke="#9c9c9c" stroke-width="1.5" />
<line x1="520.5" y1="402.45000000000005" x2="529" y2="402.45000000000005" stroke="#e0e0e0" stroke-width="1.5" />
<text x="520" y="408.55000000000007" font-size="15" fill="#dcdcdc" text-anchor="end" >90</text>
<line x1="529" y1="360.27500000000003" x2="1135" y2="360.27500000000003" stroke="#9c9c9c" stroke-width="1.5" />
<line x1="520.5" y1="360.27500000000003" x2="529" y2="360.27500000000003" stroke="#e0e0e0" stroke-width="1.5" />
<text x="520" y="366.37500000000006" font-size="15" fill="#dcdcdc" text-anchor="end" >95</text>
<line x1="529" y1="318.1" x2="1135" y2="318.1" stroke="#9c9c9c" stroke-width="1.5" />
<line x1="520.5" y1="318.1" x2="529" y2="318.1" stroke="#e0e0e0" stroke-width="1.5" />
<text x="520" y="324.20000000000005" font-size="15" fill="#dcdcdc" text-anchor="end" >100</text>
<line x1="529" y1="275.925" x2="1135" y2="275.925" stroke="#9c9c9c" stroke-width="1.5" />
<line x1="520.5" y1="275.925" x2="529" y2="275.925" stroke="#e0e0e0" stroke-width="1.5" />
<text x="520" y="282.02500000000003" font-size="15" fill="#dcdcdc" text-anchor="end" >105</text>
<line x1="529" y1="233.75000000000003" x2="1135" y2="233.75000000000003" stroke="#9c9c9c" stroke-width="1.5" />
<line x1="520.5" y1="233.75000000000003" x2="529" y2="233.75000000000003" stroke="#e0e0e0" stroke-width="1.5" />
<text x="520" y="239.85000000000002" font-size="15" fill="#dcdcdc" text-anchor="end" >110</text>
<line x1="529" y1="191.57500000000005" x2="1135" y2="191.57500000000005" stroke="#9c9c9c" stroke-width="1.5" />
<line x1="520.5" y1="191.57500000000005" x2="529" y2="191.57500000000005" stroke="#e0e0e0" stroke-width="1.5" />
<text x="520" y="197.67500000000004" font-size="15" fill="#dcdcdc" text-anchor="end" >115</text>
<line x1="520.5" y1="149.40000000000003" x2="529" y2="149.40000000000003" stroke="#e0e0e0" stroke-width="1.5" />
<text x="520" y="155.50000000000003" font-size="15" fill="#dcdcdc" text-anchor="end" >120</text>
<polyline points="529.0,316.4 589.6,323.2 650.2,318.9 710.8,321.5 771.4,318.9 832.0,318.4 892.6,319.2 953.2,318.1 1013.8,318.6 1074.4,319.4 1135.0,321.5" fill="none" stroke="#108a20" stroke-width="2.6" stroke-linejoin="round"/>
<polyline points="529.0,316.4 589.6,325.9 650.2,313.0 710.8,313.9 771.4,309.7 832.0,308.0 892.6,307.6 953.2,302.9 1013.8,302.1 1074.4,301.2 1135.0,300.4" fill="none" stroke="#ee1818" stroke-width="2.8" stroke-linejoin="round"/>
<polyline points="529.0,316.0 589.6,326.5 650.2,316.0 710.8,318.1 771.4,316.4 832.0,315.1 892.6,314.7 953.2,313.0 1013.8,311.5 1074.4,314.3 1135.0,316.4" fill="none" stroke="#1010e8" stroke-width="2.8" stroke-linejoin="round"/>
<rect x="529" y="149.4" width="606" height="337.4" fill="none" stroke="#9c9c9c" stroke-width="1.6"/>
<line x1="528" y1="149.4" x2="1136" y2="149.4" stroke="#a8a8a8" stroke-width="2.4" />
<line x1="529.0" y1="486.8" x2="529.0" y2="492.8" stroke="#e0e0e0" stroke-width="1.5" />
<text x="528.4" y="509.8" font-size="15" fill="#dcdcdc" text-anchor="middle" >0</text>
<line x1="589.6" y1="486.8" x2="589.6" y2="492.8" stroke="#e0e0e0" stroke-width="1.5" />
<text x="589.0" y="509.8" font-size="15" fill="#dcdcdc" text-anchor="middle" >10</text>
<line x1="650.2" y1="486.8" x2="650.2" y2="492.8" stroke="#e0e0e0" stroke-width="1.5" />
<text x="649.6" y="509.8" font-size="15" fill="#dcdcdc" text-anchor="middle" >20</text>
<line x1="710.8" y1="486.8" x2="710.8" y2="492.8" stroke="#e0e0e0" stroke-width="1.5" />
<text x="710.1999999999999" y="509.8" font-size="15" fill="#dcdcdc" text-anchor="middle" >30</text>
<line x1="771.4" y1="486.8" x2="771.4" y2="492.8" stroke="#e0e0e0" stroke-width="1.5" />
<text x="770.8" y="509.8" font-size="15" fill="#dcdcdc" text-anchor="middle" >40</text>
<line x1="832.0" y1="486.8" x2="832.0" y2="492.8" stroke="#e0e0e0" stroke-width="1.5" />
<text x="831.4" y="509.8" font-size="15" fill="#dcdcdc" text-anchor="middle" >50</text>
<line x1="892.5999999999999" y1="486.8" x2="892.5999999999999" y2="492.8" stroke="#e0e0e0" stroke-width="1.5" />
<text x="891.9999999999999" y="509.8" font-size="15" fill="#dcdcdc" text-anchor="middle" >60</text>
<line x1="953.2" y1="486.8" x2="953.2" y2="492.8" stroke="#e0e0e0" stroke-width="1.5" />
<text x="952.6" y="509.8" font-size="15" fill="#dcdcdc" text-anchor="middle" >70</text>
<line x1="1013.8" y1="486.8" x2="1013.8" y2="492.8" stroke="#e0e0e0" stroke-width="1.5" />
<text x="1013.1999999999999" y="509.8" font-size="15" fill="#dcdcdc" text-anchor="middle" >80</text>
<line x1="1074.4" y1="486.8" x2="1074.4" y2="492.8" stroke="#e0e0e0" stroke-width="1.5" />
<text x="1073.8000000000002" y="509.8" font-size="15" fill="#dcdcdc" text-anchor="middle" >90</text>
<line x1="1135.0" y1="486.8" x2="1135.0" y2="492.8" stroke="#e0e0e0" stroke-width="1.5" />
<text x="1134.4" y="509.8" font-size="15" fill="#dcdcdc" text-anchor="middle" >100</text>
<text x="1496.5" y="142.8" font-size="15" fill="#dcdcdc" text-anchor="middle" textLength="117" lengthAdjust="spacingAndGlyphs" >Gamma Log/Log</text>
<rect x="1205.3" y="148.3" width="610.7" height="338.0" fill="#252525" />
<line x1="1205.3" y1="482.3" x2="1816" y2="482.3" stroke="#9c9c9c" stroke-width="1.5" />
<line x1="1198" y1="482.3" x2="1205.3" y2="482.3" stroke="#e0e0e0" stroke-width="1.5" />
<text x="1197.5" y="487.3" font-size="15" fill="#dcdcdc" text-anchor="end" >1</text>
<line x1="1205.3" y1="440.18" x2="1816" y2="440.18" stroke="#9c9c9c" stroke-width="1.5" />
<line x1="1198" y1="440.18" x2="1205.3" y2="440.18" stroke="#e0e0e0" stroke-width="1.5" />
<text x="1197.5" y="445.18" font-size="15" fill="#dcdcdc" text-anchor="end" >1,2</text>
<line x1="1205.3" y1="398.06000000000006" x2="1816" y2="398.06000000000006" stroke="#9c9c9c" stroke-width="1.5" />
<line x1="1198" y1="398.06000000000006" x2="1205.3" y2="398.06000000000006" stroke="#e0e0e0" stroke-width="1.5" />
<text x="1197.5" y="403.06000000000006" font-size="15" fill="#dcdcdc" text-anchor="end" >1,4</text>
<line x1="1205.3" y1="355.94" x2="1816" y2="355.94" stroke="#9c9c9c" stroke-width="1.5" />
<line x1="1198" y1="355.94" x2="1205.3" y2="355.94" stroke="#e0e0e0" stroke-width="1.5" />
<text x="1197.5" y="360.94" font-size="15" fill="#dcdcdc" text-anchor="end" >1,6</text>
<line x1="1205.3" y1="313.82000000000005" x2="1816" y2="313.82000000000005" stroke="#9c9c9c" stroke-width="1.5" />
<line x1="1198" y1="313.82000000000005" x2="1205.3" y2="313.82000000000005" stroke="#e0e0e0" stroke-width="1.5" />
<text x="1197.5" y="318.82000000000005" font-size="15" fill="#dcdcdc" text-anchor="end" >1,8</text>
<line x1="1205.3" y1="271.70000000000005" x2="1816" y2="271.70000000000005" stroke="#9c9c9c" stroke-width="1.5" />
<line x1="1198" y1="271.70000000000005" x2="1205.3" y2="271.70000000000005" stroke="#e0e0e0" stroke-width="1.5" />
<text x="1197.5" y="276.70000000000005" font-size="15" fill="#dcdcdc" text-anchor="end" >2</text>
<line x1="1205.3" y1="229.57999999999998" x2="1816" y2="229.57999999999998" stroke="#9c9c9c" stroke-width="1.5" />
<line x1="1198" y1="229.57999999999998" x2="1205.3" y2="229.57999999999998" stroke="#e0e0e0" stroke-width="1.5" />
<text x="1197.5" y="234.57999999999998" font-size="15" fill="#dcdcdc" text-anchor="end" >2,2</text>
<line x1="1205.3" y1="187.45999999999998" x2="1816" y2="187.45999999999998" stroke="#9c9c9c" stroke-width="1.5" />
<line x1="1198" y1="187.45999999999998" x2="1205.3" y2="187.45999999999998" stroke="#e0e0e0" stroke-width="1.5" />
<text x="1197.5" y="192.45999999999998" font-size="15" fill="#dcdcdc" text-anchor="end" >2,4</text>
<clipPath id="gclip"><rect x="1204.3" y="148.3" width="612.2" height="338.0"/></clipPath>
<polyline points="1205.3,421.9 1211.4,357.6 1214.5,352.1 1217.5,342.7 1220.6,334.3 1223.6,326.7 1226.7,319.7 1229.7,313.0 1232.8,307.0 1235.8,301.7 1241.9,292.8 1248.0,285.6 1254.2,279.6 1260.3,274.4 1266.4,270.0 1278.6,262.7 1290.8,257.0 1303.0,252.3 1315.2,248.4 1327.4,245.0 1345.8,240.9 1364.1,237.5 1388.5,233.8 1419.0,230.1 1449.6,227.1 1480.1,224.7 1510.7,222.6 1541.2,220.9 1571.7,219.4 1602.3,218.0 1632.8,216.9 1663.3,215.8 1693.9,214.9 1724.4,214.0 1754.9,213.3 1785.5,212.6 1809.9,212.0 1816.0,210.6" fill="none" stroke="#ffff1e" stroke-width="2.7" stroke-linejoin="round" clip-path="url(#gclip)"/>
<polyline points="1205.3,421.9 1266.4,257.8 1327.4,243.3 1388.5,229.6 1449.6,227.5 1510.7,222.8 1571.7,217.8 1632.8,221.2 1693.9,220.9 1754.9,220.3 1816.0,211.3" fill="none" stroke="#9a9a9a" stroke-width="2.4" stroke-linejoin="round" clip-path="url(#gclip)"/>
<rect x="1205.3" y="148.3" width="610.7" height="338.0" fill="none" stroke="#9c9c9c" stroke-width="1.6"/>
<line x1="1205.3" y1="486.3" x2="1205.3" y2="492.3" stroke="#e0e0e0" stroke-width="1.5" />
<text x="1204.7" y="509.8" font-size="15" fill="#dcdcdc" text-anchor="middle" >0</text>
<line x1="1266.37" y1="486.3" x2="1266.37" y2="492.3" stroke="#e0e0e0" stroke-width="1.5" />
<text x="1265.77" y="509.8" font-size="15" fill="#dcdcdc" text-anchor="middle" >10</text>
<line x1="1327.44" y1="486.3" x2="1327.44" y2="492.3" stroke="#e0e0e0" stroke-width="1.5" />
<text x="1326.8400000000001" y="509.8" font-size="15" fill="#dcdcdc" text-anchor="middle" >20</text>
<line x1="1388.51" y1="486.3" x2="1388.51" y2="492.3" stroke="#e0e0e0" stroke-width="1.5" />
<text x="1387.91" y="509.8" font-size="15" fill="#dcdcdc" text-anchor="middle" >30</text>
<line x1="1449.58" y1="486.3" x2="1449.58" y2="492.3" stroke="#e0e0e0" stroke-width="1.5" />
<text x="1448.98" y="509.8" font-size="15" fill="#dcdcdc" text-anchor="middle" >40</text>
<line x1="1510.65" y1="486.3" x2="1510.65" y2="492.3" stroke="#e0e0e0" stroke-width="1.5" />
<text x="1510.0500000000002" y="509.8" font-size="15" fill="#dcdcdc" text-anchor="middle" >50</text>
<line x1="1571.72" y1="486.3" x2="1571.72" y2="492.3" stroke="#e0e0e0" stroke-width="1.5" />
<text x="1571.1200000000001" y="509.8" font-size="15" fill="#dcdcdc" text-anchor="middle" >60</text>
<line x1="1632.79" y1="486.3" x2="1632.79" y2="492.3" stroke="#e0e0e0" stroke-width="1.5" />
<text x="1632.19" y="509.8" font-size="15" fill="#dcdcdc" text-anchor="middle" >70</text>
<line x1="1693.8600000000001" y1="486.3" x2="1693.8600000000001" y2="492.3" stroke="#e0e0e0" stroke-width="1.5" />
<text x="1693.2600000000002" y="509.8" font-size="15" fill="#dcdcdc" text-anchor="middle" >80</text>
<line x1="1754.93" y1="486.3" x2="1754.93" y2="492.3" stroke="#e0e0e0" stroke-width="1.5" />
<text x="1754.3300000000002" y="509.8" font-size="15" fill="#dcdcdc" text-anchor="middle" >90</text>
<line x1="1816.0" y1="486.3" x2="1816.0" y2="492.3" stroke="#e0e0e0" stroke-width="1.5" />
<text x="1815.4" y="509.8" font-size="15" fill="#dcdcdc" text-anchor="middle" >100</text>
<text x="169.3" y="554" font-size="30" fill="#f4f4f4" textLength="230.4" lengthAdjust="spacingAndGlyphs" >Avg dE2000: 2,8</text>
<text x="606" y="554" font-size="30" fill="#f4f4f4" textLength="203" lengthAdjust="spacingAndGlyphs" >Avg CCT: 6313</text>
<clipPath id="crc"><rect x="900" y="520" width="470.5" height="50"/></clipPath>
<text x="933" y="554" font-size="30" fill="#f4f4f4" textLength="443" lengthAdjust="spacingAndGlyphs" clip-path="url(#crc)">Contrast Ratio: 413504489125</text>
<text x="1461.5" y="554" font-size="30" fill="#f4f4f4" textLength="274" lengthAdjust="spacingAndGlyphs" >Total Gamma: 2,19</text>
<rect x="77" y="575" width="1774" height="139.2" fill="#000000" />
<rect x="360.0" y="582" width="104.2" height="54" fill="#000000" />
<rect x="360.0" y="636" width="104.2" height="54" fill="#000000" />
<rect x="359.8" y="581.8" width="104.6" height="108.2" fill="none" stroke="#ffffff" stroke-width="1.6"/>
<text x="412.1" y="705.5" font-size="13" fill="#f0f0f0" text-anchor="middle" >0</text>
<rect x="482.5" y="582" width="104.2" height="54" fill="#1b1b1b" />
<rect x="482.5" y="636" width="104.2" height="54" fill="#1a1a1a" />
<rect x="482.3" y="581.8" width="104.6" height="108.2" fill="none" stroke="#ffffff" stroke-width="1.6"/>
<text x="534.6" y="705.5" font-size="13" fill="#f0f0f0" text-anchor="middle" >10</text>
<rect x="605.0" y="582" width="104.2" height="54" fill="#353333" />
<rect x="605.0" y="636" width="104.2" height="54" fill="#333333" />
<rect x="604.8" y="581.8" width="104.6" height="108.2" fill="none" stroke="#ffffff" stroke-width="1.6"/>
<text x="657.1" y="705.5" font-size="13" fill="#f0f0f0" text-anchor="middle" >20</text>
<rect x="727.5" y="582" width="104.2" height="54" fill="#4e4c4c" />
<rect x="727.5" y="636" width="104.2" height="54" fill="#4d4d4d" />
<rect x="727.3" y="581.8" width="104.6" height="108.2" fill="none" stroke="#ffffff" stroke-width="1.6"/>
<text x="779.6" y="705.5" font-size="13" fill="#f0f0f0" text-anchor="middle" >30</text>
<rect x="850.0" y="582" width="104.2" height="54" fill="#696666" />
<rect x="850.0" y="636" width="104.2" height="54" fill="#666666" />
<rect x="849.8" y="581.8" width="104.6" height="108.2" fill="none" stroke="#ffffff" stroke-width="1.6"/>
<text x="902.1" y="705.5" font-size="13" fill="#f0f0f0" text-anchor="middle" >40</text>
<rect x="972.5" y="582" width="104.2" height="54" fill="#838080" />
<rect x="972.5" y="636" width="104.2" height="54" fill="#808080" />
<rect x="972.3" y="581.8" width="104.6" height="108.2" fill="none" stroke="#ffffff" stroke-width="1.6"/>
<text x="1024.6" y="705.5" font-size="13" fill="#f0f0f0" text-anchor="middle" >50</text>
<rect x="1095.0" y="582" width="104.2" height="54" fill="#9e9b9b" />
<rect x="1095.0" y="636" width="104.2" height="54" fill="#999999" />
<rect x="1094.8" y="581.8" width="104.6" height="108.2" fill="none" stroke="#ffffff" stroke-width="1.6"/>
<text x="1147.1" y="705.5" font-size="13" fill="#f0f0f0" text-anchor="middle" >60</text>
<rect x="1217.5" y="582" width="104.2" height="54" fill="#b8b2b3" />
<rect x="1217.5" y="636" width="104.2" height="54" fill="#b3b3b3" />
<rect x="1217.3" y="581.8" width="104.6" height="108.2" fill="none" stroke="#ffffff" stroke-width="1.6"/>
<text x="1269.6" y="705.5" font-size="13" fill="#f0f0f0" text-anchor="middle" >70</text>
<rect x="1340.0" y="582" width="104.2" height="54" fill="#d2cccd" />
<rect x="1340.0" y="636" width="104.2" height="54" fill="#cccccc" />
<rect x="1339.8" y="581.8" width="104.6" height="108.2" fill="none" stroke="#ffffff" stroke-width="1.6"/>
<text x="1392.1" y="705.5" font-size="13" fill="#f0f0f0" text-anchor="middle" >80</text>
<rect x="1462.5" y="582" width="104.2" height="54" fill="#ece5e7" />
<rect x="1462.5" y="636" width="104.2" height="54" fill="#e6e6e6" />
<rect x="1462.3" y="581.8" width="104.6" height="108.2" fill="none" stroke="#ffffff" stroke-width="1.6"/>
<text x="1514.6" y="705.5" font-size="13" fill="#f0f0f0" text-anchor="middle" >90</text>
<rect x="1585.0" y="582" width="104.2" height="54" fill="#fff5f6" />
<rect x="1585.0" y="636" width="104.2" height="54" fill="#f7f7f7" />
<rect x="1584.8" y="581.8" width="104.6" height="108.2" fill="none" stroke="#ffffff" stroke-width="1.6"/>
<text x="1637.1" y="705.5" font-size="13" fill="#f0f0f0" text-anchor="middle" >100</text>
<text transform="translate(352 624) rotate(-90)" font-size="13" fill="#f0f0f0" textLength="37.5" lengthAdjust="spacingAndGlyphs">Actual</text>
<text transform="translate(352 684.5) rotate(-90)" font-size="13" fill="#f0f0f0" textLength="37" lengthAdjust="spacingAndGlyphs">Target</text>
<text x="91.1" y="770.8" font-size="31" fill="#f4f4f4" textLength="235.8" lengthAdjust="spacingAndGlyphs" >Current Reading</text>
<text x="92" y="815.2" font-size="24" fill="#f4f4f4" textLength="110" lengthAdjust="spacingAndGlyphs" >x: 0,3333</text>
<text x="92" y="858.8" font-size="24" fill="#f4f4f4" textLength="110.3" lengthAdjust="spacingAndGlyphs" >y: 0,3333</text>
<text x="91.5" y="902.2" font-size="24" fill="#f4f4f4" textLength="51.5" lengthAdjust="spacingAndGlyphs" >fL: 0</text>
<text x="91" y="945.8" font-size="24" fill="#f4f4f4" textLength="103.5" lengthAdjust="spacingAndGlyphs" >cd/m²: 0</text>
<rect x="424.5" y="737.5" width="311.5" height="228.3" fill="#000000" />
<rect x="431.5" y="744.5" width="297.5" height="216.5" fill="#333333" />
<rect x="472.0" y="747.0" width="254.7" height="184.0" fill="#ffffff" />
<rect x="472.0" y="747" width="254.7" height="8" fill="url(#cr0)"/>
<rect x="472.0" y="747" width="254.7" height="8" fill="url(#cr1)" mask="url(#vfade)"/>
<rect x="472.0" y="755" width="254.7" height="8" fill="url(#cr1)"/>
<rect x="472.0" y="755" width="254.7" height="8" fill="url(#cr2)" mask="url(#vfade)"/>
<rect x="472.0" y="763" width="254.7" height="8" fill="url(#cr2)"/>
<rect x="472.0" y="763" width="254.7" height="8" fill="url(#cr3)" mask="url(#vfade)"/>
<rect x="472.0" y="771" width="254.7" height="8" fill="url(#cr3)"/>
<rect x="472.0" y="771" width="254.7" height="8" fill="url(#cr4)" mask="url(#vfade)"/>
<rect x="472.0" y="779" width="254.7" height="8" fill="url(#cr4)"/>
<rect x="472.0" y="779" width="254.7" height="8" fill="url(#cr5)" mask="url(#vfade)"/>
<rect x="472.0" y="787" width="254.7" height="8" fill="url(#cr5)"/>
<rect x="472.0" y="787" width="254.7" height="8" fill="url(#cr6)" mask="url(#vfade)"/>
<rect x="472.0" y="795" width="254.7" height="8" fill="url(#cr6)"/>
<rect x="472.0" y="795" width="254.7" height="8" fill="url(#cr7)" mask="url(#vfade)"/>
<rect x="472.0" y="803" width="254.7" height="8" fill="url(#cr7)"/>
<rect x="472.0" y="803" width="254.7" height="8" fill="url(#cr8)" mask="url(#vfade)"/>
<rect x="472.0" y="811" width="254.7" height="8" fill="url(#cr8)"/>
<rect x="472.0" y="811" width="254.7" height="8" fill="url(#cr9)" mask="url(#vfade)"/>
<rect x="472.0" y="819" width="254.7" height="8" fill="url(#cr9)"/>
<rect x="472.0" y="819" width="254.7" height="8" fill="url(#cr10)" mask="url(#vfade)"/>
<rect x="472.0" y="827" width="254.7" height="8" fill="url(#cr10)"/>
<rect x="472.0" y="827" width="254.7" height="8" fill="url(#cr11)" mask="url(#vfade)"/>
<rect x="472.0" y="835" width="254.7" height="8" fill="url(#cr11)"/>
<rect x="472.0" y="835" width="254.7" height="8" fill="url(#cr12)" mask="url(#vfade)"/>
<rect x="472.0" y="843" width="254.7" height="8" fill="url(#cr12)"/>
<rect x="472.0" y="843" width="254.7" height="8" fill="url(#cr13)" mask="url(#vfade)"/>
<rect x="472.0" y="851" width="254.7" height="8" fill="url(#cr13)"/>
<rect x="472.0" y="851" width="254.7" height="8" fill="url(#cr14)" mask="url(#vfade)"/>
<rect x="472.0" y="859" width="254.7" height="8" fill="url(#cr14)"/>
<rect x="472.0" y="859" width="254.7" height="8" fill="url(#cr15)" mask="url(#vfade)"/>
<rect x="472.0" y="867" width="254.7" height="8" fill="url(#cr15)"/>
<rect x="472.0" y="867" width="254.7" height="8" fill="url(#cr16)" mask="url(#vfade)"/>
<rect x="472.0" y="875" width="254.7" height="8" fill="url(#cr16)"/>
<rect x="472.0" y="875" width="254.7" height="8" fill="url(#cr17)" mask="url(#vfade)"/>
<rect x="472.0" y="883" width="254.7" height="8" fill="url(#cr17)"/>
<rect x="472.0" y="883" width="254.7" height="8" fill="url(#cr18)" mask="url(#vfade)"/>
<rect x="472.0" y="891" width="254.7" height="8" fill="url(#cr18)"/>
<rect x="472.0" y="891" width="254.7" height="8" fill="url(#cr19)" mask="url(#vfade)"/>
<rect x="472.0" y="899" width="254.7" height="8" fill="url(#cr19)"/>
<rect x="472.0" y="899" width="254.7" height="8" fill="url(#cr20)" mask="url(#vfade)"/>
<rect x="472.0" y="907" width="254.7" height="8" fill="url(#cr20)"/>
<rect x="472.0" y="907" width="254.7" height="8" fill="url(#cr21)" mask="url(#vfade)"/>
<rect x="472.0" y="915" width="254.7" height="8" fill="url(#cr21)"/>
<rect x="472.0" y="915" width="254.7" height="8" fill="url(#cr22)" mask="url(#vfade)"/>
<rect x="472.0" y="923" width="254.7" height="8" fill="url(#cr22)"/>
<rect x="472.0" y="923" width="254.7" height="8" fill="url(#cr23)" mask="url(#vfade)"/>
<rect x="472.0" y="747.0" width="254.7" height="184.0" fill="none" stroke="#9a9a9a" stroke-width="1.5"/>
<clipPath id="ccp"><rect x="472" y="747" width="254.7" height="184"/></clipPath>
<path d="M503 932.5Q613 850.5 728 776.8" fill="none" stroke="#000" stroke-width="3.2" clip-path="url(#ccp)"/>
<line x1="486.09999999999997" y1="931.5" x2="486.09999999999997" y2="937" stroke="#e0e0e0" stroke-width="1.5" />
<text x="486.09999999999997" y="952.8" font-size="15" fill="#dcdcdc" text-anchor="middle" >0,29</text>
<line x1="535.65" y1="931.5" x2="535.65" y2="937" stroke="#e0e0e0" stroke-width="1.5" />
<text x="535.65" y="952.8" font-size="15" fill="#dcdcdc" text-anchor="middle" >0,3</text>
<line x1="585.2" y1="931.5" x2="585.2" y2="937" stroke="#e0e0e0" stroke-width="1.5" />
<text x="585.2" y="952.8" font-size="15" fill="#dcdcdc" text-anchor="middle" >0,31</text>
<line x1="634.7500000000001" y1="931.5" x2="634.7500000000001" y2="937" stroke="#e0e0e0" stroke-width="1.5" />
<text x="634.7500000000001" y="952.8" font-size="15" fill="#dcdcdc" text-anchor="middle" >0,32</text>
<line x1="684.3000000000002" y1="931.5" x2="684.3000000000002" y2="937" stroke="#e0e0e0" stroke-width="1.5" />
<text x="684.3000000000002" y="952.8" font-size="15" fill="#dcdcdc" text-anchor="middle" >0,33</text>
<line x1="466.5" y1="799.8" x2="472" y2="799.8" stroke="#e0e0e0" stroke-width="1.5" />
<text x="466" y="805.4" font-size="15" fill="#dcdcdc" text-anchor="end" >0,34</text>
<line x1="466.5" y1="872.5" x2="472" y2="872.5" stroke="#e0e0e0" stroke-width="1.5" />
<text x="466" y="878.1" font-size="15" fill="#dcdcdc" text-anchor="end" >0,32</text>
<circle cx="614" cy="823.2" r="4.6" fill="#151515"/>
<circle cx="699.5" cy="823.3" r="4.6" fill="#050505"/>
<rect x="590.6" y="831.8" width="14" height="14" fill="#ffffff" stroke="#000" stroke-width="1.5"/>
<circle cx="619.8" cy="840.6" r="4.4" fill="#6a6a6a" stroke="#000" stroke-width="1.1"/>
<circle cx="614.2" cy="849.6" r="4.4" fill="#9a9a9a" stroke="#000" stroke-width="1.1"/>
<circle cx="615.6" cy="848.8" r="4.4" fill="#c8c8c8" stroke="#000" stroke-width="1.1"/>
<circle cx="617.4" cy="848" r="4.4" fill="#e4e4e4" stroke="#000" stroke-width="1.1"/>
<circle cx="619" cy="847.2" r="4.4" fill="#f4f4f4" stroke="#000" stroke-width="1.1"/>
<circle cx="620.8" cy="846.4" r="4.4" fill="#ffffff" stroke="#000" stroke-width="1.1"/>
<rect x="743" y="722.5" width="921" height="224.5" fill="#1c1c1c" />
<rect x="744" y="723.5" width="919" height="30.5" fill="url(#gHdr)" />
<text x="940.8" y="745" font-size="15" fill="#f4f4f4" text-anchor="middle" >0</text>
<text x="1009.52" y="745" font-size="15" fill="#f4f4f4" text-anchor="middle" >10</text>
<text x="1078.24" y="745" font-size="15" fill="#f4f4f4" text-anchor="middle" >20</text>
<text x="1146.96" y="745" font-size="15" fill="#f4f4f4" text-anchor="middle" >30</text>
<text x="1215.68" y="745" font-size="15" fill="#f4f4f4" text-anchor="middle" >40</text>
<text x="1284.3999999999999" y="745" font-size="15" fill="#f4f4f4" text-anchor="middle" >50</text>
<text x="1353.12" y="745" font-size="15" fill="#f4f4f4" text-anchor="middle" >60</text>
<text x="1421.84" y="745" font-size="15" fill="#f4f4f4" text-anchor="middle" >70</text>
<text x="1490.56" y="745" font-size="15" fill="#f4f4f4" text-anchor="middle" >80</text>
<text x="1559.28" y="745" font-size="15" fill="#f4f4f4" text-anchor="middle" >90</text>
<text x="1628.0" y="745" font-size="15" fill="#f4f4f4" text-anchor="middle" >100</text>
<rect x="744" y="754.0" width="919" height="27.5" fill="url(#gRowD)" />
<text x="758" y="774.6" font-size="16" fill="#ffffff" font-weight="bold" textLength="63.3" lengthAdjust="spacingAndGlyphs" >x: CIE31</text>
<text x="911.0" y="774.6" font-size="16" fill="#f6f6f6" letter-spacing="0.25">0,33</text>
<text x="979.7" y="774.6" font-size="16" fill="#f6f6f6" letter-spacing="0.25">0,32</text>
<text x="1048.4" y="774.6" font-size="16" fill="#f6f6f6" letter-spacing="0.25">0,32</text>
<text x="1117.2" y="774.6" font-size="16" fill="#f6f6f6" letter-spacing="0.25">0,32</text>
<text x="1185.9" y="774.6" font-size="16" fill="#f6f6f6" letter-spacing="0.25">0,32</text>
<text x="1254.6" y="774.6" font-size="16" fill="#f6f6f6" letter-spacing="0.25">0,32</text>
<text x="1323.3" y="774.6" font-size="16" fill="#f6f6f6" letter-spacing="0.25">0,32</text>
<text x="1392.0" y="774.6" font-size="16" fill="#f6f6f6" letter-spacing="0.25">0,32</text>
<text x="1460.8" y="774.6" font-size="16" fill="#f6f6f6" letter-spacing="0.25">0,32</text>
<text x="1529.5" y="774.6" font-size="16" fill="#f6f6f6" letter-spacing="0.25">0,32</text>
<text x="1598.2" y="774.6" font-size="16" fill="#f6f6f6" letter-spacing="0.25">0,32</text>
<rect x="744" y="781.4" width="919" height="27.5" fill="url(#gRowL)" />
<text x="758" y="802.0" font-size="16" fill="#ffffff" font-weight="bold" textLength="63.5" lengthAdjust="spacingAndGlyphs" >y: CIE31</text>
<text x="911.0" y="802.0" font-size="16" fill="#ececec" letter-spacing="0.25">0,33</text>
<text x="979.7" y="802.0" font-size="16" fill="#ececec" letter-spacing="0.25">0,33</text>
<text x="1048.4" y="802.0" font-size="16" fill="#ececec" letter-spacing="0.25">0,33</text>
<text x="1117.2" y="802.0" font-size="16" fill="#ececec" letter-spacing="0.25">0,33</text>
<text x="1185.9" y="802.0" font-size="16" fill="#ececec" letter-spacing="0.25">0,33</text>
<text x="1254.6" y="802.0" font-size="16" fill="#ececec" letter-spacing="0.25">0,33</text>
<text x="1323.3" y="802.0" font-size="16" fill="#ececec" letter-spacing="0.25">0,33</text>
<text x="1392.0" y="802.0" font-size="16" fill="#ececec" letter-spacing="0.25">0,33</text>
<text x="1460.8" y="802.0" font-size="16" fill="#ececec" letter-spacing="0.25">0,33</text>
<text x="1529.5" y="802.0" font-size="16" fill="#ececec" letter-spacing="0.25">0,33</text>
<text x="1598.2" y="802.0" font-size="16" fill="#ececec" letter-spacing="0.25">0,33</text>
<rect x="744" y="808.8" width="919" height="27.5" fill="url(#gRowD)" />
<text x="758" y="829.4" font-size="16" fill="#ffffff" font-weight="bold" textLength="10.5" lengthAdjust="spacingAndGlyphs" >Y</text>
<text x="911.0" y="829.4" font-size="16" fill="#f6f6f6" letter-spacing="0.25">0,00</text>
<text x="979.7" y="829.4" font-size="16" fill="#f6f6f6" letter-spacing="0.25">3,78</text>
<text x="1048.4" y="829.4" font-size="16" fill="#f6f6f6" letter-spacing="0.25">13,47</text>
<text x="1117.2" y="829.4" font-size="16" fill="#f6f6f6" letter-spacing="0.25">29,10</text>
<text x="1185.9" y="829.4" font-size="16" fill="#f6f6f6" letter-spacing="0.25">54,97</text>
<text x="1254.6" y="829.4" font-size="16" fill="#f6f6f6" letter-spacing="0.25">89,35</text>
<text x="1323.3" y="829.4" font-size="16" fill="#f6f6f6" letter-spacing="0.25">131,37</text>
<text x="1392.0" y="829.4" font-size="16" fill="#f6f6f6" letter-spacing="0.25">185,57</text>
<text x="1460.8" y="829.4" font-size="16" fill="#f6f6f6" letter-spacing="0.25">251,40</text>
<text x="1529.5" y="829.4" font-size="16" fill="#f6f6f6" letter-spacing="0.25">328,42</text>
<text x="1598.2" y="829.4" font-size="16" fill="#f6f6f6" letter-spacing="0.25">413,50</text>
<rect x="744" y="836.2" width="919" height="27.5" fill="url(#gRowL)" />
<text x="758" y="856.8" font-size="16" fill="#ffffff" font-weight="bold" textLength="66" lengthAdjust="spacingAndGlyphs" >Target Y</text>
<text x="911.0" y="856.8" font-size="16" fill="#ececec" letter-spacing="0.25">0,00</text>
<text x="979.7" y="856.8" font-size="16" fill="#ececec" letter-spacing="0.25">4,27</text>
<text x="1048.4" y="856.8" font-size="16" fill="#ececec" letter-spacing="0.25">13,69</text>
<text x="1117.2" y="856.8" font-size="16" fill="#ececec" letter-spacing="0.25">29,88</text>
<text x="1185.9" y="856.8" font-size="16" fill="#ececec" letter-spacing="0.25">54,94</text>
<text x="1254.6" y="856.8" font-size="16" fill="#ececec" letter-spacing="0.25">89,26</text>
<text x="1323.3" y="856.8" font-size="16" fill="#ececec" letter-spacing="0.25">131,72</text>
<text x="1392.0" y="856.8" font-size="16" fill="#ececec" letter-spacing="0.25">184,09</text>
<text x="1460.8" y="856.8" font-size="16" fill="#ececec" letter-spacing="0.25">249,69</text>
<text x="1529.5" y="856.8" font-size="16" fill="#ececec" letter-spacing="0.25">327,21</text>
<text x="1598.2" y="856.8" font-size="16" fill="#ececec" letter-spacing="0.25">413,50</text>
<rect x="744" y="863.6" width="919" height="27.5" fill="url(#gRowD)" />
<text x="758" y="884.2" font-size="16" fill="#ffffff" font-weight="bold" textLength="135" lengthAdjust="spacingAndGlyphs" >Gamma Log/Log</text>
<text x="911.0" y="884.2" font-size="16" fill="#f6f6f6" letter-spacing="0.25">1,28</text>
<text x="979.7" y="884.2" font-size="16" fill="#f6f6f6" letter-spacing="0.25">2,06</text>
<text x="1048.4" y="884.2" font-size="16" fill="#f6f6f6" letter-spacing="0.25">2,13</text>
<text x="1117.2" y="884.2" font-size="16" fill="#f6f6f6" letter-spacing="0.25">2,19</text>
<text x="1185.9" y="884.2" font-size="16" fill="#f6f6f6" letter-spacing="0.25">2,20</text>
<text x="1254.6" y="884.2" font-size="16" fill="#f6f6f6" letter-spacing="0.25">2,22</text>
<text x="1323.3" y="884.2" font-size="16" fill="#f6f6f6" letter-spacing="0.25">2,24</text>
<text x="1392.0" y="884.2" font-size="16" fill="#f6f6f6" letter-spacing="0.25">2,23</text>
<text x="1460.8" y="884.2" font-size="16" fill="#f6f6f6" letter-spacing="0.25">2,23</text>
<text x="1529.5" y="884.2" font-size="16" fill="#f6f6f6" letter-spacing="0.25">2,23</text>
<text x="1598.2" y="884.2" font-size="16" fill="#f6f6f6" letter-spacing="0.25">2,27</text>
<rect x="744" y="891.0" width="919" height="27.5" fill="url(#gRowL)" />
<text x="758" y="911.6" font-size="16" fill="#ffffff" font-weight="bold" textLength="30" lengthAdjust="spacingAndGlyphs" >CCT</text>
<text x="911.0" y="911.6" font-size="16" fill="#ececec" letter-spacing="0.25">5456,00</text>
<text x="979.7" y="911.6" font-size="16" fill="#ececec" letter-spacing="0.25">6301,00</text>
<text x="1048.4" y="911.6" font-size="16" fill="#ececec" letter-spacing="0.25">6345,00</text>
<text x="1117.2" y="911.6" font-size="16" fill="#ececec" letter-spacing="0.25">6328,00</text>
<text x="1185.9" y="911.6" font-size="16" fill="#ececec" letter-spacing="0.25">6273,00</text>
<text x="1254.6" y="911.6" font-size="16" fill="#ececec" letter-spacing="0.25">6337,00</text>
<text x="1323.3" y="911.6" font-size="16" fill="#ececec" letter-spacing="0.25">6348,00</text>
<text x="1392.0" y="911.6" font-size="16" fill="#ececec" letter-spacing="0.25">6305,00</text>
<text x="1460.8" y="911.6" font-size="16" fill="#ececec" letter-spacing="0.25">6328,00</text>
<text x="1529.5" y="911.6" font-size="16" fill="#ececec" letter-spacing="0.25">6300,00</text>
<text x="1598.2" y="911.6" font-size="16" fill="#ececec" letter-spacing="0.25">6268,00</text>
<rect x="744" y="918.4" width="919" height="27.5" fill="url(#gRowD)" />
<text x="758" y="939.0" font-size="16" fill="#ffffff" font-weight="bold" textLength="65" lengthAdjust="spacingAndGlyphs" >ΔE 2000</text>
<text x="911.0" y="939.0" font-size="16" fill="#f6f6f6" letter-spacing="0.25">0,00</text>
<text x="979.7" y="939.0" font-size="16" fill="#f6f6f6" letter-spacing="0.25">0,80</text>
<text x="1048.4" y="939.0" font-size="16" fill="#f6f6f6" letter-spacing="0.25">1,59</text>
<text x="1117.2" y="939.0" font-size="16" fill="#f6f6f6" letter-spacing="0.25">1,92</text>
<text x="1185.9" y="939.0" font-size="16" fill="#f6f6f6" letter-spacing="0.25">1,91</text>
<text x="1254.6" y="939.0" font-size="16" fill="#f6f6f6" letter-spacing="0.25">2,63</text>
<text x="1323.3" y="939.0" font-size="16" fill="#f6f6f6" letter-spacing="0.25">2,97</text>
<text x="1392.0" y="939.0" font-size="16" fill="#f6f6f6" letter-spacing="0.25">3,43</text>
<text x="1460.8" y="939.0" font-size="16" fill="#f6f6f6" letter-spacing="0.25">4,08</text>
<text x="1529.5" y="939.0" font-size="16" fill="#f6f6f6" letter-spacing="0.25">4,25</text>
<text x="1598.2" y="939.0" font-size="16" fill="#f6f6f6" letter-spacing="0.25">4,66</text>
<rect x="0" y="968" width="1920" height="71" fill="#2b2b2b" />
<rect x="0" y="968" width="1920" height="1.2" fill="#333333" />
<rect x="1.4" y="969" width="139.8" height="68.5" rx="4.5" fill="url(#gBBsel)"/>
<rect x="6.6" y="974.4" width="128.6" height="41" rx="3.2" fill="#000000"/>
<text x="70.8" y="1032.9" font-size="10.6" fill="#ffffff" text-anchor="middle" font-weight="bold" >0</text>
<rect x="143.3" y="969" width="139.8" height="68.5" rx="4.5" fill="url(#gBB)"/>
<rect x="148.5" y="974.4" width="128.6" height="41" rx="3.2" fill="#1a1a1a"/>
<rect x="149.0" y="974.9" width="127.6" height="40" rx="3" fill="none" stroke="#000" stroke-opacity="0.16" stroke-width="1"/>
<path d="M149.8 975H275.8" stroke="#000" stroke-opacity="0.2" stroke-width="1.2"/>
<text x="212.7" y="1032.9" font-size="10.6" fill="#2c2c2c" text-anchor="middle" font-weight="bold" >10</text>
<rect x="285.2" y="969" width="139.8" height="68.5" rx="4.5" fill="url(#gBB)"/>
<rect x="290.4" y="974.4" width="128.6" height="41" rx="3.2" fill="#333333"/>
<rect x="290.9" y="974.9" width="127.6" height="40" rx="3" fill="none" stroke="#000" stroke-opacity="0.16" stroke-width="1"/>
<path d="M291.7 975H417.7" stroke="#000" stroke-opacity="0.2" stroke-width="1.2"/>
<text x="354.6" y="1032.9" font-size="10.6" fill="#2c2c2c" text-anchor="middle" font-weight="bold" >20</text>
<rect x="427.1" y="969" width="139.8" height="68.5" rx="4.5" fill="url(#gBB)"/>
<rect x="432.3" y="974.4" width="128.6" height="41" rx="3.2" fill="#4d4d4d"/>
<rect x="432.8" y="974.9" width="127.6" height="40" rx="3" fill="none" stroke="#000" stroke-opacity="0.16" stroke-width="1"/>
<path d="M433.6 975H559.6" stroke="#000" stroke-opacity="0.2" stroke-width="1.2"/>
<text x="496.5" y="1032.9" font-size="10.6" fill="#2c2c2c" text-anchor="middle" font-weight="bold" >30</text>
<rect x="569.0" y="969" width="139.8" height="68.5" rx="4.5" fill="url(#gBB)"/>
<rect x="574.2" y="974.4" width="128.6" height="41" rx="3.2" fill="#666666"/>
<rect x="574.7" y="974.9" width="127.6" height="40" rx="3" fill="none" stroke="#000" stroke-opacity="0.16" stroke-width="1"/>
<path d="M575.5 975H701.5" stroke="#000" stroke-opacity="0.2" stroke-width="1.2"/>
<text x="638.4" y="1032.9" font-size="10.6" fill="#2c2c2c" text-anchor="middle" font-weight="bold" >40</text>
<rect x="710.9" y="969" width="139.8" height="68.5" rx="4.5" fill="url(#gBB)"/>
<rect x="716.1" y="974.4" width="128.6" height="41" rx="3.2" fill="#808080"/>
<rect x="716.6" y="974.9" width="127.6" height="40" rx="3" fill="none" stroke="#000" stroke-opacity="0.16" stroke-width="1"/>
<path d="M717.4 975H843.4" stroke="#000" stroke-opacity="0.2" stroke-width="1.2"/>
<text x="780.3" y="1032.9" font-size="10.6" fill="#2c2c2c" text-anchor="middle" font-weight="bold" >50</text>
<rect x="852.8" y="969" width="139.8" height="68.5" rx="4.5" fill="url(#gBB)"/>
<rect x="858.0" y="974.4" width="128.6" height="41" rx="3.2" fill="#999999"/>
<rect x="858.5" y="974.9" width="127.6" height="40" rx="3" fill="none" stroke="#000" stroke-opacity="0.16" stroke-width="1"/>
<path d="M859.3 975H985.3" stroke="#000" stroke-opacity="0.2" stroke-width="1.2"/>
<text x="922.2" y="1032.9" font-size="10.6" fill="#2c2c2c" text-anchor="middle" font-weight="bold" >60</text>
<rect x="994.7" y="969" width="139.8" height="68.5" rx="4.5" fill="url(#gBB)"/>
<rect x="999.9" y="974.4" width="128.6" height="41" rx="3.2" fill="#b3b3b3"/>
<rect x="1000.4" y="974.9" width="127.6" height="40" rx="3" fill="none" stroke="#000" stroke-opacity="0.16" stroke-width="1"/>
<path d="M1001.2 975H1127.2" stroke="#000" stroke-opacity="0.2" stroke-width="1.2"/>
<text x="1064.1" y="1032.9" font-size="10.6" fill="#2c2c2c" text-anchor="middle" font-weight="bold" >70</text>
<rect x="1136.6" y="969" width="139.8" height="68.5" rx="4.5" fill="url(#gBB)"/>
<rect x="1141.8" y="974.4" width="128.6" height="41" rx="3.2" fill="#cccccc"/>
<rect x="1142.3" y="974.9" width="127.6" height="40" rx="3" fill="none" stroke="#000" stroke-opacity="0.16" stroke-width="1"/>
<path d="M1143.1 975H1269.1" stroke="#000" stroke-opacity="0.2" stroke-width="1.2"/>
<text x="1206.0" y="1032.9" font-size="10.6" fill="#2c2c2c" text-anchor="middle" font-weight="bold" >80</text>
<rect x="1278.5" y="969" width="139.8" height="68.5" rx="4.5" fill="url(#gBB)"/>
<rect x="1283.7" y="974.4" width="128.6" height="41" rx="3.2" fill="#e6e6e6"/>
<rect x="1284.2" y="974.9" width="127.6" height="40" rx="3" fill="none" stroke="#000" stroke-opacity="0.16" stroke-width="1"/>
<path d="M1285.0 975H1411.0" stroke="#000" stroke-opacity="0.2" stroke-width="1.2"/>
<text x="1347.9" y="1032.9" font-size="10.6" fill="#2c2c2c" text-anchor="middle" font-weight="bold" >90</text>
<rect x="1420.4" y="969" width="139.8" height="68.5" rx="4.5" fill="url(#gBB)"/>
<rect x="1425.6" y="974.4" width="128.6" height="41" rx="3.2" fill="#ffffff"/>
<rect x="1426.1" y="974.9" width="127.6" height="40" rx="3" fill="none" stroke="#000" stroke-opacity="0.16" stroke-width="1"/>
<path d="M1426.9 975H1552.9" stroke="#000" stroke-opacity="0.2" stroke-width="1.2"/>
<text x="1489.8" y="1032.9" font-size="10.6" fill="#2c2c2c" text-anchor="middle" font-weight="bold" >100</text>
<path d="M1563.5 989V973Q1563.5 969 1567.5 969H1613Q1617 969 1617 973V989Z" fill="url(#gCtl)"/>
<circle cx="1590.3" cy="978.7" r="8" fill="url(#gCtlC)"/><path d="M1585 981.2L1590.3 976.4L1595.6 981.2Z" fill="#333"/>
<path d="M1563.5 990.5H1617V1033.5Q1617 1037.5 1613 1037.5H1567.5Q1563.5 1037.5 1563.5 1033.5Z" fill="url(#gCtlD)"/>
<rect x="1574.2" y="997.9" width="32.2" height="31.8" rx="4.5" fill="url(#gGloss)" stroke="#1c1c1c" stroke-width="2.4"/>
<rect x="1582.7" y="1006.5" width="15.6" height="7.6" fill="#242424" />
<rect x="1582.7" y="1014" width="15.6" height="7.7" fill="#000" />
<rect x="1619.6" y="969" width="49.8" height="33.2" fill="url(#gCtl)" />
<circle cx="1644.5" cy="985.6" r="11" fill="url(#gCtlC)"/>
<rect x="1670.6" y="969" width="49.8" height="33.2" fill="url(#gCtl)" />
<circle cx="1695.5" cy="985.6" r="11" fill="url(#gCtlC)"/>
<rect x="1721.6" y="969" width="49.8" height="33.2" fill="url(#gCtl)" />
<circle cx="1746.5" cy="985.6" r="11" fill="url(#gCtlC)"/>
<rect x="1772.6" y="969" width="49.8" height="33.2" fill="url(#gCtl)" />
<circle cx="1797.5" cy="985.6" r="11" fill="url(#gCtlC)"/>
<rect x="1823.6" y="969" width="49.8" height="33.2" fill="url(#gCtl)" />
<circle cx="1848.5" cy="985.6" r="11" fill="url(#gCtlC)"/>
<rect x="1874.6" y="969" width="45.4" height="33.2" fill="url(#gDarkR)" />
<circle cx="1899" cy="985.6" r="12" fill="#3b3b3b"/>
<rect x="1640.5" y="981.6" width="8" height="8" fill="#2a2a2a" />
<path d="M1692.2 980L1701.8 985.6L1692.2 991.2Z" fill="#2a2a2a"/>
<path d="M1744.2 980.3H1741.4V990.9H1744.2M1748.8 980.3H1751.6V990.9H1748.8" fill="none" stroke="#2a2a2a" stroke-width="2.1"/><path d="M1744.3 985.6H1748.9" stroke="#2a2a2a" stroke-width="1.8" stroke-dasharray="1.4 1.4"/>
<path d="M1797.5 985.6C1795.5 982.2 1791.5 982.2 1791.5 985.6C1791.5 989 1795.5 989 1797.5 985.6C1799.5 982.2 1803.5 982.2 1803.5 985.6C1803.5 989 1799.5 989 1797.5 985.6Z" fill="none" stroke="#2a2a2a" stroke-width="1.7"/>
<path d="M1843.2 984.2A5.6 5.6 0 0 1 1853 982.4M1853.8 987A5.6 5.6 0 0 1 1844 988.8" fill="none" stroke="#2a2a2a" stroke-width="2.4"/><path d="M1855 979.2V984.6H1849.6Z M1842 991.8V986.4H1847.4Z" fill="#2a2a2a"/>
<path d="M1619.5 1037.5V1008Q1619.5 1004 1623.5 1004H1771.6V1037.5Z" fill="url(#gCtl2)"/>
<path d="M1772.6 1004H1920V1037.5H1772.6Z" fill="url(#gCtl2)"/>
<circle cx="1653.8" cy="1021" r="11" fill="url(#gCtlC)"/><circle cx="1894.3" cy="1021" r="11" fill="url(#gCtlC)"/>
<path d="M1653 1016.6L1649 1021L1653 1025.4M1658 1016.6L1654 1021L1658 1025.4" fill="none" stroke="#333" stroke-width="2"/>
<path d="M1890.4 1016.6L1894.4 1021L1890.4 1025.4M1895.4 1016.6L1899.4 1021L1895.4 1025.4" fill="none" stroke="#333" stroke-width="2"/>
<text x="1684" y="1030.7" font-size="24" fill="#c8c8c8" textLength="56.3" lengthAdjust="spacingAndGlyphs" >Back</text>
<text x="1684" y="1029.8" font-size="24" fill="#343434" textLength="56.3" lengthAdjust="spacingAndGlyphs" stroke="#343434" stroke-width="0.5">Back</text>
<text x="1804.8" y="1030.7" font-size="24" fill="#c8c8c8" textLength="57.8" lengthAdjust="spacingAndGlyphs" >Next</text>
<text x="1804.8" y="1029.8" font-size="24" fill="#343434" textLength="57.8" lengthAdjust="spacingAndGlyphs" stroke="#343434" stroke-width="0.5">Next</text>
</svg>
</body></html>
